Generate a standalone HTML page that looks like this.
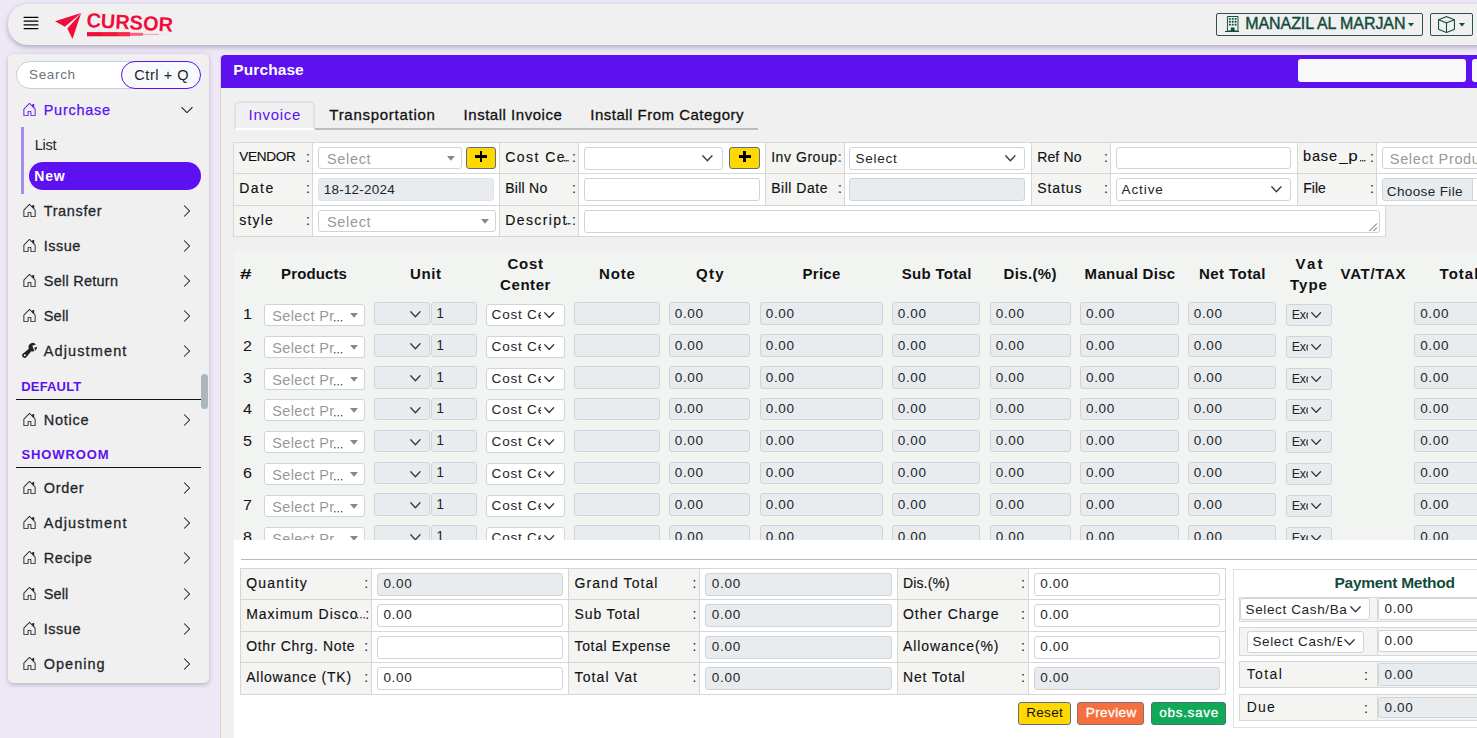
<!DOCTYPE html>
<html><head><meta charset="utf-8"><title>Purchase</title>
<style>
html,body{margin:0;padding:0;}
html{overflow:hidden;width:1477px;height:738px;}
body{width:1477px;height:738px;overflow:hidden;position:relative;background:#ede7f6;font-family:"Liberation Sans", sans-serif;}
div,span{box-sizing:border-box}
#app{position:absolute;left:0;top:0;width:1477px;height:738px;overflow:hidden;}
svg{position:absolute;overflow:visible}
</style></head><body>
<div id="app">
<div style="position:absolute;left:8.00px;top:4.00px;width:1532.00px;height:40.70px;box-sizing:border-box;background:#f0f0f0;border-radius:20px 0 0 20px;box-shadow:0 2px 5px rgba(60,50,80,.35);"></div>
<svg style="left:20.60px;top:13.40px" width="20" height="20" viewBox="0 0 16 16" fill="#000" ><path d="M2 12.5a.5.5 0 0 1 .5-.5h11a.5.5 0 0 1 0 1h-11a.5.5 0 0 1-.5-.5m0-3a.5.5 0 0 1 .5-.5h11a.5.5 0 0 1 0 1h-11a.5.5 0 0 1-.5-.5m0-3a.5.5 0 0 1 .5-.5h11a.5.5 0 0 1 0 1h-11a.5.5 0 0 1-.5-.5m0-3a.5.5 0 0 1 .5-.5h11a.5.5 0 0 1 0 1h-11a.5.5 0 0 1-.5-.5"/></svg>
<svg style="left:0;top:0" width="200" height="48" viewBox="0 0 200 48"><g fill="#f20c3a"><path d="M55.0 21.3L81.0 12.9L80.0 13.9L64.9 26.7Z"/><path d="M81.1 13.3L72.5 38.9L67.3 28.6Z"/></g><path d="M87 32.1H102V36.3H87Z" fill="#f20c3a"/><path d="M102 32.1H117V36.3H102Z" fill="#f3173f"/><path d="M117 32.1H130V36.3H117Z" fill="#f42a4f"/><path d="M130 32.8H143V35.8H130Z" fill="#f5607c"/><path d="M143 33.9H159V35H143Z" fill="#f6a3b2"/><path d="M159 34.2H173V34.8H159Z" fill="#f0dfe2"/><text x="86.2" y="26.9" font-family="Liberation Sans" font-weight="700" font-size="20.3" fill="#f20c3a" textLength="86.5" lengthAdjust="spacingAndGlyphs" transform="rotate(3.2 86 27)">CURSOR</text></svg>
<div style="position:absolute;left:1216.00px;top:13.00px;width:207.00px;height:23.00px;box-sizing:border-box;border:1px solid #2f5447;border-radius:2px;"></div>
<svg style="left:1225.00px;top:16.20px" width="15.4" height="15.4" viewBox="0 0 16 16" fill="#0f4c3a" ><path d="M4 2.5a.5.5 0 0 1 .5-.5h1a.5.5 0 0 1 .5.5v1a.5.5 0 0 1-.5.5h-1a.5.5 0 0 1-.5-.5zm3 0a.5.5 0 0 1 .5-.5h1a.5.5 0 0 1 .5.5v1a.5.5 0 0 1-.5.5h-1a.5.5 0 0 1-.5-.5zm3.5-.5a.5.5 0 0 0-.5.5v1a.5.5 0 0 0 .5.5h1a.5.5 0 0 0 .5-.5v-1a.5.5 0 0 0-.5-.5zM4 5.5a.5.5 0 0 1 .5-.5h1a.5.5 0 0 1 .5.5v1a.5.5 0 0 1-.5.5h-1a.5.5 0 0 1-.5-.5zM7.500 5a.5.5 0 0 0-.5.5v1a.5.5 0 0 0 .5.5h1a.5.5 0 0 0 .5-.5v-1a.5.5 0 0 0-.5-.5zm2.500.5a.5.5 0 0 1 .5-.5h1a.5.5 0 0 1 .5.5v1a.5.5 0 0 1-.5.5h-1a.5.5 0 0 1-.5-.5zM4.500 8a.5.5 0 0 0-.5.5v1a.5.5 0 0 0 .5.5h1a.5.5 0 0 0 .5-.5v-1a.5.5 0 0 0-.5-.5zm2.500.5a.5.5 0 0 1 .5-.5h1a.5.5 0 0 1 .5.5v1a.5.5 0 0 1-.5.5h-1a.5.5 0 0 1-.5-.5zm3.500-.5a.5.5 0 0 0-.5.5v1a.5.5 0 0 0 .5.5h1a.5.5 0 0 0 .5-.5v-1a.5.5 0 0 0-.5-.5z"/><path d="M2 1a1 1 0 0 1 1-1h10a1 1 0 0 1 1 1v14a1 1 0 0 1-1 1H3a1 1 0 0 1-1-1zm11 0H3v14h3v-2.500a.5.5 0 0 1 .5-.5h3a.5.5 0 0 1 .5.5V15h3z"/></svg>
<div style="position:absolute;left:1225.20px;top:30.60px;width:14.00px;height:1.10px;box-sizing:border-box;background:#0f4c3a;"></div>
<span style="position:absolute;left:1245.24px;top:15.66px;font-size:16px;line-height:1;white-space:pre;color:#0f4c3a;letter-spacing:-0.081px;-webkit-text-stroke:0.4px #0f4c3a;">MANAZIL AL MARJAN</span>
<svg style="left:1407.50px;top:23.30px" width="6" height="3.4" viewBox="0 0 6 3.4"><path d="M0 0H6L3.0 3.4Z" fill="#0f4c3a"/></svg>
<div style="position:absolute;left:1430.00px;top:13.00px;width:43.00px;height:23.00px;box-sizing:border-box;border:1px solid #2f5447;border-radius:2px;"></div>
<svg style="left:1437.50px;top:15.50px" width="17" height="17" viewBox="0 0 16 16" fill="#0f4c3a" ><path d="M8.186 1.113a.5.5 0 0 0-.372 0L1.846 3.500 8 5.961 14.154 3.500zM15 4.239l-6.500 2.600v7.922l6.500-2.600V4.240zM7.500 14.762V6.838L1 4.239v7.923zM7.443.184a1.500 1.500 0 0 1 1.114 0l7.129 2.852A.5.5 0 0 1 16 3.500v8.662a1 1 0 0 1-.629.928l-7.185 2.874a.5.5 0 0 1-.372 0L.630 13.090a1 1 0 0 1-.630-.928V3.500a.5.5 0 0 1 .314-.464z"/></svg>
<svg style="left:1458.50px;top:23.30px" width="6" height="3.4" viewBox="0 0 6 3.4"><path d="M0 0H6L3.0 3.4Z" fill="#0f4c3a"/></svg>
<div style="position:absolute;left:8.00px;top:53.60px;width:201.00px;height:629.40px;box-sizing:border-box;background:#f0f0f0;border-radius:5px;box-shadow:0 1.5px 4px rgba(60,50,80,.27);"></div>
<div style="position:absolute;left:16.00px;top:61.00px;width:184.00px;height:28.00px;box-sizing:border-box;background:#fff;border:1px solid #c9ced6;border-radius:14px;"></div>
<span style="position:absolute;left:28.99px;top:68.07px;font-size:13.5px;line-height:1;white-space:pre;color:#6c757d;letter-spacing:0.668px;">Search</span>
<div style="position:absolute;left:121.00px;top:61.00px;width:79.60px;height:28.00px;box-sizing:border-box;background:#f8f9fa;border:1.5px solid #5d10f0;border-radius:14px;"></div>
<span style="position:absolute;left:134.33px;top:67.93px;font-size:14.5px;line-height:1;white-space:pre;color:#212529;letter-spacing:0.554px;">Ctrl + Q</span>
<svg style="left:21.90px;top:102.00px" width="15" height="15" viewBox="0 0 16 16" fill="#5d10f0" ><path d="M8.354 1.146a.5.5 0 0 0-.708 0l-6 6A.5.5 0 0 0 1.5 7.5v7a.5.5 0 0 0 .5.5h4.5a.5.5 0 0 0 .5-.5v-4h2v4a.5.5 0 0 0 .5.5H14a.5.5 0 0 0 .5-.5v-7a.5.5 0 0 0-.146-.354L13 5.793V2.500a.5.5 0 0 0-.5-.5h-1a.5.5 0 0 0-.5.5v1.293zM2.5 14V7.707l5.5-5.500 5.500 5.500V14H10v-4a.5.5 0 0 0-.5-.5h-3a.5.5 0 0 0-.5.5v4z"/></svg>
<span style="position:absolute;left:43.73px;top:102.63px;font-size:14.5px;line-height:1;white-space:pre;color:#5d10f0;letter-spacing:0.725px;-webkit-text-stroke:0.25px #5d10f0;">Purchase</span>
<svg style="left:180.00px;top:102.90px" width="14" height="14" viewBox="0 0 16 16" fill="#0a0a0a" ><path d="M1.646 4.646a.5.5 0 0 1 .708 0L8 10.293l5.646-5.647a.5.5 0 0 1 .708.708l-6 6a.5.5 0 0 1-.708 0l-6-6a.5.5 0 0 1 0-.708"/></svg>
<div style="position:absolute;left:21.00px;top:127.00px;width:3.00px;height:66.60px;box-sizing:border-box;background:#a88af3;"></div>
<span style="position:absolute;left:34.63px;top:137.73px;font-size:14.5px;line-height:1;white-space:pre;color:#212529;letter-spacing:-0.213px;">List</span>
<div style="position:absolute;left:29.00px;top:161.80px;width:172.20px;height:28.00px;box-sizing:border-box;background:#5d10f0;border-radius:14px;"></div>
<span style="position:absolute;left:34.36px;top:169.35px;font-size:14px;line-height:1;white-space:pre;color:#fff;font-weight:700;letter-spacing:0.742px;">New</span>
<svg style="left:21.90px;top:203.00px" width="15" height="15" viewBox="0 0 16 16" fill="#212529" ><path d="M8.354 1.146a.5.5 0 0 0-.708 0l-6 6A.5.5 0 0 0 1.5 7.5v7a.5.5 0 0 0 .5.5h4.5a.5.5 0 0 0 .5-.5v-4h2v4a.5.5 0 0 0 .5.5H14a.5.5 0 0 0 .5-.5v-7a.5.5 0 0 0-.146-.354L13 5.793V2.500a.5.5 0 0 0-.5-.5h-1a.5.5 0 0 0-.5.5v1.293zM2.5 14V7.707l5.5-5.500 5.500 5.500V14H10v-4a.5.5 0 0 0-.5-.5h-3a.5.5 0 0 0-.5.5v4z"/></svg>
<span style="position:absolute;left:43.73px;top:203.63px;font-size:14.5px;line-height:1;white-space:pre;color:#212529;letter-spacing:0.627px;-webkit-text-stroke:0.27px #212529;">Transfer</span>
<svg style="left:180.00px;top:204.00px" width="14" height="14" viewBox="0 0 16 16" fill="#0a0a0a" ><path d="M4.646 1.646a.5.5 0 0 1 .708 0l6 6a.5.5 0 0 1 0 .708l-6 6a.5.5 0 0 1-.708-.708L10.293 8 4.646 2.354a.5.5 0 0 1 0-.708"/></svg>
<svg style="left:21.90px;top:238.00px" width="15" height="15" viewBox="0 0 16 16" fill="#212529" ><path d="M8.354 1.146a.5.5 0 0 0-.708 0l-6 6A.5.5 0 0 0 1.5 7.5v7a.5.5 0 0 0 .5.5h4.5a.5.5 0 0 0 .5-.5v-4h2v4a.5.5 0 0 0 .5.5H14a.5.5 0 0 0 .5-.5v-7a.5.5 0 0 0-.146-.354L13 5.793V2.500a.5.5 0 0 0-.5-.5h-1a.5.5 0 0 0-.5.5v1.293zM2.5 14V7.707l5.5-5.500 5.500 5.500V14H10v-4a.5.5 0 0 0-.5-.5h-3a.5.5 0 0 0-.5.5v4z"/></svg>
<span style="position:absolute;left:43.73px;top:238.63px;font-size:14.5px;line-height:1;white-space:pre;color:#212529;letter-spacing:0.467px;-webkit-text-stroke:0.27px #212529;">Issue</span>
<svg style="left:180.00px;top:239.00px" width="14" height="14" viewBox="0 0 16 16" fill="#0a0a0a" ><path d="M4.646 1.646a.5.5 0 0 1 .708 0l6 6a.5.5 0 0 1 0 .708l-6 6a.5.5 0 0 1-.708-.708L10.293 8 4.646 2.354a.5.5 0 0 1 0-.708"/></svg>
<svg style="left:21.90px;top:273.00px" width="15" height="15" viewBox="0 0 16 16" fill="#212529" ><path d="M8.354 1.146a.5.5 0 0 0-.708 0l-6 6A.5.5 0 0 0 1.5 7.5v7a.5.5 0 0 0 .5.5h4.5a.5.5 0 0 0 .5-.5v-4h2v4a.5.5 0 0 0 .5.5H14a.5.5 0 0 0 .5-.5v-7a.5.5 0 0 0-.146-.354L13 5.793V2.500a.5.5 0 0 0-.5-.5h-1a.5.5 0 0 0-.5.5v1.293zM2.5 14V7.707l5.5-5.500 5.500 5.500V14H10v-4a.5.5 0 0 0-.5-.5h-3a.5.5 0 0 0-.5.5v4z"/></svg>
<span style="position:absolute;left:43.73px;top:273.63px;font-size:14.5px;line-height:1;white-space:pre;color:#212529;letter-spacing:0.251px;-webkit-text-stroke:0.27px #212529;">Sell Return</span>
<svg style="left:180.00px;top:274.00px" width="14" height="14" viewBox="0 0 16 16" fill="#0a0a0a" ><path d="M4.646 1.646a.5.5 0 0 1 .708 0l6 6a.5.5 0 0 1 0 .708l-6 6a.5.5 0 0 1-.708-.708L10.293 8 4.646 2.354a.5.5 0 0 1 0-.708"/></svg>
<svg style="left:21.90px;top:308.00px" width="15" height="15" viewBox="0 0 16 16" fill="#212529" ><path d="M8.354 1.146a.5.5 0 0 0-.708 0l-6 6A.5.5 0 0 0 1.5 7.5v7a.5.5 0 0 0 .5.5h4.5a.5.5 0 0 0 .5-.5v-4h2v4a.5.5 0 0 0 .5.5H14a.5.5 0 0 0 .5-.5v-7a.5.5 0 0 0-.146-.354L13 5.793V2.500a.5.5 0 0 0-.5-.5h-1a.5.5 0 0 0-.5.5v1.293zM2.5 14V7.707l5.5-5.500 5.500 5.500V14H10v-4a.5.5 0 0 0-.5-.5h-3a.5.5 0 0 0-.5.5v4z"/></svg>
<span style="position:absolute;left:43.73px;top:308.63px;font-size:14.5px;line-height:1;white-space:pre;color:#212529;letter-spacing:0.217px;-webkit-text-stroke:0.27px #212529;">Sell</span>
<svg style="left:180.00px;top:309.00px" width="14" height="14" viewBox="0 0 16 16" fill="#0a0a0a" ><path d="M4.646 1.646a.5.5 0 0 1 .708 0l6 6a.5.5 0 0 1 0 .708l-6 6a.5.5 0 0 1-.708-.708L10.293 8 4.646 2.354a.5.5 0 0 1 0-.708"/></svg>
<svg style="left:21.90px;top:343.00px" width="15" height="15" viewBox="0 0 16 16" fill="#212529" ><path d="M16 4.500a4.500 4.500 0 0 1-1.703 3.526L13 5l2.959-1.110q.040.300.041.610"/><path d="M11.500 9c.653 0 1.273-.139 1.833-.390L12 5.500 11 3l3.826-1.530A4.500 4.500 0 0 0 7.290 6.092l-6.116 5.096a2.583 2.583 0 1 0 3.638 3.638L9.908 8.710A4.500 4.500 0 0 0 11.500 9M3 14a1 1 0 1 1 0-2 1 1 0 0 1 0 2"/></svg>
<span style="position:absolute;left:43.73px;top:343.63px;font-size:14.5px;line-height:1;white-space:pre;color:#212529;letter-spacing:1.121px;-webkit-text-stroke:0.27px #212529;">Adjustment</span>
<svg style="left:180.00px;top:344.00px" width="14" height="14" viewBox="0 0 16 16" fill="#0a0a0a" ><path d="M4.646 1.646a.5.5 0 0 1 .708 0l6 6a.5.5 0 0 1 0 .708l-6 6a.5.5 0 0 1-.708-.708L10.293 8 4.646 2.354a.5.5 0 0 1 0-.708"/></svg>
<span style="position:absolute;left:21.22px;top:380.30px;font-size:13px;line-height:1;white-space:pre;color:#5d10f0;font-weight:700;letter-spacing:0.179px;">DEFAULT</span>
<div style="position:absolute;left:16.00px;top:399.20px;width:184.60px;height:1.10px;box-sizing:border-box;background:#111;"></div>
<div style="position:absolute;left:201.00px;top:374.00px;width:7.00px;height:35.00px;box-sizing:border-box;background:#adb5bd;border-radius:3.5px;"></div>
<svg style="left:21.90px;top:412.00px" width="15" height="15" viewBox="0 0 16 16" fill="#212529" ><path d="M8.354 1.146a.5.5 0 0 0-.708 0l-6 6A.5.5 0 0 0 1.5 7.5v7a.5.5 0 0 0 .5.5h4.5a.5.5 0 0 0 .5-.5v-4h2v4a.5.5 0 0 0 .5.5H14a.5.5 0 0 0 .5-.5v-7a.5.5 0 0 0-.146-.354L13 5.793V2.500a.5.5 0 0 0-.5-.5h-1a.5.5 0 0 0-.5.5v1.293zM2.5 14V7.707l5.5-5.500 5.500 5.500V14H10v-4a.5.5 0 0 0-.5-.5h-3a.5.5 0 0 0-.5.5v4z"/></svg>
<span style="position:absolute;left:43.73px;top:412.63px;font-size:14.5px;line-height:1;white-space:pre;color:#212529;letter-spacing:0.766px;-webkit-text-stroke:0.27px #212529;">Notice</span>
<svg style="left:180.00px;top:413.00px" width="14" height="14" viewBox="0 0 16 16" fill="#0a0a0a" ><path d="M4.646 1.646a.5.5 0 0 1 .708 0l6 6a.5.5 0 0 1 0 .708l-6 6a.5.5 0 0 1-.708-.708L10.293 8 4.646 2.354a.5.5 0 0 1 0-.708"/></svg>
<span style="position:absolute;left:21.42px;top:448.40px;font-size:13px;line-height:1;white-space:pre;color:#5d10f0;font-weight:700;letter-spacing:0.896px;">SHOWROOM</span>
<div style="position:absolute;left:16.00px;top:467.00px;width:184.60px;height:1.10px;box-sizing:border-box;background:#111;"></div>
<svg style="left:21.90px;top:480.00px" width="15" height="15" viewBox="0 0 16 16" fill="#212529" ><path d="M8.354 1.146a.5.5 0 0 0-.708 0l-6 6A.5.5 0 0 0 1.5 7.5v7a.5.5 0 0 0 .5.5h4.5a.5.5 0 0 0 .5-.5v-4h2v4a.5.5 0 0 0 .5.5H14a.5.5 0 0 0 .5-.5v-7a.5.5 0 0 0-.146-.354L13 5.793V2.500a.5.5 0 0 0-.5-.5h-1a.5.5 0 0 0-.5.5v1.293zM2.5 14V7.707l5.5-5.500 5.500 5.500V14H10v-4a.5.5 0 0 0-.5-.5h-3a.5.5 0 0 0-.5.5v4z"/></svg>
<span style="position:absolute;left:43.73px;top:480.63px;font-size:14.5px;line-height:1;white-space:pre;color:#212529;letter-spacing:0.715px;-webkit-text-stroke:0.27px #212529;">Order</span>
<svg style="left:180.00px;top:481.00px" width="14" height="14" viewBox="0 0 16 16" fill="#0a0a0a" ><path d="M4.646 1.646a.5.5 0 0 1 .708 0l6 6a.5.5 0 0 1 0 .708l-6 6a.5.5 0 0 1-.708-.708L10.293 8 4.646 2.354a.5.5 0 0 1 0-.708"/></svg>
<svg style="left:21.90px;top:515.00px" width="15" height="15" viewBox="0 0 16 16" fill="#212529" ><path d="M8.354 1.146a.5.5 0 0 0-.708 0l-6 6A.5.5 0 0 0 1.5 7.5v7a.5.5 0 0 0 .5.5h4.5a.5.5 0 0 0 .5-.5v-4h2v4a.5.5 0 0 0 .5.5H14a.5.5 0 0 0 .5-.5v-7a.5.5 0 0 0-.146-.354L13 5.793V2.500a.5.5 0 0 0-.5-.5h-1a.5.5 0 0 0-.5.5v1.293zM2.5 14V7.707l5.5-5.500 5.500 5.500V14H10v-4a.5.5 0 0 0-.5-.5h-3a.5.5 0 0 0-.5.5v4z"/></svg>
<span style="position:absolute;left:43.73px;top:515.63px;font-size:14.5px;line-height:1;white-space:pre;color:#212529;letter-spacing:1.133px;-webkit-text-stroke:0.27px #212529;">Adjustment</span>
<svg style="left:180.00px;top:516.00px" width="14" height="14" viewBox="0 0 16 16" fill="#0a0a0a" ><path d="M4.646 1.646a.5.5 0 0 1 .708 0l6 6a.5.5 0 0 1 0 .708l-6 6a.5.5 0 0 1-.708-.708L10.293 8 4.646 2.354a.5.5 0 0 1 0-.708"/></svg>
<svg style="left:21.90px;top:550.00px" width="15" height="15" viewBox="0 0 16 16" fill="#212529" ><path d="M8.354 1.146a.5.5 0 0 0-.708 0l-6 6A.5.5 0 0 0 1.5 7.5v7a.5.5 0 0 0 .5.5h4.5a.5.5 0 0 0 .5-.5v-4h2v4a.5.5 0 0 0 .5.5H14a.5.5 0 0 0 .5-.5v-7a.5.5 0 0 0-.146-.354L13 5.793V2.500a.5.5 0 0 0-.5-.5h-1a.5.5 0 0 0-.5.5v1.293zM2.5 14V7.707l5.5-5.500 5.500 5.500V14H10v-4a.5.5 0 0 0-.5-.5h-3a.5.5 0 0 0-.5.5v4z"/></svg>
<span style="position:absolute;left:43.73px;top:550.63px;font-size:14.5px;line-height:1;white-space:pre;color:#212529;letter-spacing:0.580px;-webkit-text-stroke:0.27px #212529;">Recipe</span>
<svg style="left:180.00px;top:551.00px" width="14" height="14" viewBox="0 0 16 16" fill="#0a0a0a" ><path d="M4.646 1.646a.5.5 0 0 1 .708 0l6 6a.5.5 0 0 1 0 .708l-6 6a.5.5 0 0 1-.708-.708L10.293 8 4.646 2.354a.5.5 0 0 1 0-.708"/></svg>
<svg style="left:21.90px;top:586.00px" width="15" height="15" viewBox="0 0 16 16" fill="#212529" ><path d="M8.354 1.146a.5.5 0 0 0-.708 0l-6 6A.5.5 0 0 0 1.5 7.5v7a.5.5 0 0 0 .5.5h4.5a.5.5 0 0 0 .5-.5v-4h2v4a.5.5 0 0 0 .5.5H14a.5.5 0 0 0 .5-.5v-7a.5.5 0 0 0-.146-.354L13 5.793V2.500a.5.5 0 0 0-.5-.5h-1a.5.5 0 0 0-.5.5v1.293zM2.5 14V7.707l5.5-5.500 5.500 5.500V14H10v-4a.5.5 0 0 0-.5-.5h-3a.5.5 0 0 0-.5.5v4z"/></svg>
<span style="position:absolute;left:43.73px;top:586.63px;font-size:14.5px;line-height:1;white-space:pre;color:#212529;letter-spacing:0.118px;-webkit-text-stroke:0.27px #212529;">Sell</span>
<svg style="left:180.00px;top:587.00px" width="14" height="14" viewBox="0 0 16 16" fill="#0a0a0a" ><path d="M4.646 1.646a.5.5 0 0 1 .708 0l6 6a.5.5 0 0 1 0 .708l-6 6a.5.5 0 0 1-.708-.708L10.293 8 4.646 2.354a.5.5 0 0 1 0-.708"/></svg>
<svg style="left:21.90px;top:621.00px" width="15" height="15" viewBox="0 0 16 16" fill="#212529" ><path d="M8.354 1.146a.5.5 0 0 0-.708 0l-6 6A.5.5 0 0 0 1.5 7.5v7a.5.5 0 0 0 .5.5h4.5a.5.5 0 0 0 .5-.5v-4h2v4a.5.5 0 0 0 .5.5H14a.5.5 0 0 0 .5-.5v-7a.5.5 0 0 0-.146-.354L13 5.793V2.500a.5.5 0 0 0-.5-.5h-1a.5.5 0 0 0-.5.5v1.293zM2.5 14V7.707l5.5-5.500 5.500 5.500V14H10v-4a.5.5 0 0 0-.5-.5h-3a.5.5 0 0 0-.5.5v4z"/></svg>
<span style="position:absolute;left:43.73px;top:621.63px;font-size:14.5px;line-height:1;white-space:pre;color:#212529;letter-spacing:0.517px;-webkit-text-stroke:0.27px #212529;">Issue</span>
<svg style="left:180.00px;top:622.00px" width="14" height="14" viewBox="0 0 16 16" fill="#0a0a0a" ><path d="M4.646 1.646a.5.5 0 0 1 .708 0l6 6a.5.5 0 0 1 0 .708l-6 6a.5.5 0 0 1-.708-.708L10.293 8 4.646 2.354a.5.5 0 0 1 0-.708"/></svg>
<svg style="left:21.90px;top:656.00px" width="15" height="15" viewBox="0 0 16 16" fill="#212529" ><path d="M8.354 1.146a.5.5 0 0 0-.708 0l-6 6A.5.5 0 0 0 1.5 7.5v7a.5.5 0 0 0 .5.5h4.5a.5.5 0 0 0 .5-.5v-4h2v4a.5.5 0 0 0 .5.5H14a.5.5 0 0 0 .5-.5v-7a.5.5 0 0 0-.146-.354L13 5.793V2.500a.5.5 0 0 0-.5-.5h-1a.5.5 0 0 0-.5.5v1.293zM2.5 14V7.707l5.5-5.500 5.500 5.500V14H10v-4a.5.5 0 0 0-.5-.5h-3a.5.5 0 0 0-.5.5v4z"/></svg>
<span style="position:absolute;left:43.73px;top:656.63px;font-size:14.5px;line-height:1;white-space:pre;color:#212529;letter-spacing:1.019px;-webkit-text-stroke:0.27px #212529;">Opening</span>
<svg style="left:180.00px;top:657.00px" width="14" height="14" viewBox="0 0 16 16" fill="#0a0a0a" ><path d="M4.646 1.646a.5.5 0 0 1 .708 0l6 6a.5.5 0 0 1 0 .708l-6 6a.5.5 0 0 1-.708-.708L10.293 8 4.646 2.354a.5.5 0 0 1 0-.708"/></svg>
<div style="position:absolute;left:220.00px;top:56.00px;width:1320.00px;height:744.00px;box-sizing:border-box;background:#f0f0f0;border-left:1px solid #d2d2d2;"></div>
<div style="position:absolute;left:221.00px;top:54.80px;width:1319.00px;height:32.80px;box-sizing:border-box;background:#5d10f0;border-radius:4px 0 0 0;"></div>
<span style="position:absolute;left:233.37px;top:62.28px;font-size:15.5px;line-height:1;white-space:pre;color:#fff;font-weight:700;letter-spacing:0.080px;">Purchase</span>
<div style="position:absolute;left:1298.00px;top:59.20px;width:167.60px;height:22.90px;box-sizing:border-box;background:#f8f8f8;border-radius:3px;"></div>
<div style="position:absolute;left:1472.00px;top:59.20px;width:68.00px;height:22.90px;box-sizing:border-box;background:#f8f8f8;border-radius:3px;"></div>
<div style="position:absolute;left:315.00px;top:128.00px;width:443.00px;height:2.00px;box-sizing:border-box;background:#bcbcbc;"></div>
<div style="position:absolute;left:234.00px;top:101.00px;width:81.00px;height:29.00px;box-sizing:border-box;background:#f0f0f0;border:2px solid #dde1e7;border-bottom:2px solid #fff;border-radius:6px 6px 0 0;"></div>
<span style="position:absolute;left:248.60px;top:106.80px;font-size:15px;line-height:1;white-space:pre;color:#5d10f0;letter-spacing:0.711px;">Invoice</span>
<span style="position:absolute;left:329.30px;top:106.80px;font-size:15px;line-height:1;white-space:pre;color:#111;letter-spacing:0.725px;-webkit-text-stroke:0.3px #111;">Transportation</span>
<span style="position:absolute;left:463.60px;top:106.80px;font-size:15px;line-height:1;white-space:pre;color:#111;letter-spacing:0.522px;-webkit-text-stroke:0.3px #111;">Install Invoice</span>
<span style="position:absolute;left:590.30px;top:106.80px;font-size:15px;line-height:1;white-space:pre;color:#111;letter-spacing:0.490px;-webkit-text-stroke:0.3px #111;">Install From Category</span>
<div style="position:absolute;left:233.00px;top:142.00px;width:80.00px;height:32.00px;box-sizing:border-box;background:#f4f5f3;border:1px solid #d9d6d6;"></div>
<span style="position:absolute;left:239.18px;top:150.09px;font-size:13.6px;line-height:1;white-space:pre;color:#111;letter-spacing:-0.308px;-webkit-text-stroke:0.15px #111;">VENDOR</span>
<span style="position:absolute;left:306.06px;top:149.75px;font-size:14px;line-height:1;white-space:pre;color:#111;">:</span>
<div style="position:absolute;left:312.00px;top:142.00px;width:188.00px;height:32.00px;box-sizing:border-box;background:#fff;border:1px solid #d9d6d6;"></div>
<div style="position:absolute;left:318.00px;top:147.00px;width:144.00px;height:22.00px;box-sizing:border-box;background:#fff;border:1px solid #ced4da;border-radius:3px;"></div>
<span style="position:absolute;left:326.93px;top:151.63px;font-size:14.5px;line-height:1;white-space:pre;color:#999;letter-spacing:0.686px;">Select</span>
<svg style="left:447.10px;top:156.05px" width="7.8" height="4.7" viewBox="0 0 7.8 4.7"><path d="M0 0H7.8L3.9 4.7Z" fill="#888"/></svg>
<div style="position:absolute;left:466.00px;top:147.00px;width:30.00px;height:22.00px;box-sizing:border-box;background:#ffd800;border:1px solid #5f6d8c;border-radius:3px;"></div>
<div style="position:absolute;left:475.00px;top:155.20px;width:12.00px;height:2.60px;box-sizing:border-box;background:#000;"></div>
<div style="position:absolute;left:479.70px;top:150.90px;width:2.60px;height:11.00px;box-sizing:border-box;background:#000;"></div>
<div style="position:absolute;left:499.00px;top:142.00px;width:80.00px;height:32.00px;box-sizing:border-box;background:#f4f5f3;border:1px solid #d9d6d6;"></div>
<span style="position:absolute;left:505.16px;top:149.75px;font-size:14px;line-height:1;white-space:pre;color:#111;letter-spacing:1.467px;-webkit-text-stroke:0.15px #111;">Cost Ce</span>
<svg style="left:564.20px;top:160.14px" width="4.80" height="1.46" fill="#111"><circle cx="0.73" cy="0.73" r="0.73"/><circle cx="2.40" cy="0.73" r="0.73"/><circle cx="4.07" cy="0.73" r="0.73"/></svg>
<span style="position:absolute;left:572.06px;top:149.75px;font-size:14px;line-height:1;white-space:pre;color:#111;">:</span>
<div style="position:absolute;left:578.00px;top:142.00px;width:188.00px;height:32.00px;box-sizing:border-box;background:#fff;border:1px solid #d9d6d6;"></div>
<div style="position:absolute;left:584.00px;top:147.00px;width:139.00px;height:23.00px;box-sizing:border-box;background:#fff;border:1px solid #ced4da;border-radius:3px;"></div>
<svg style="left:701.60px;top:155.36px" width="10.8" height="6.48" viewBox="0 0 10.8 6.48"><path d="M0.775 0.775L5.4 5.71L10.025 0.775" fill="none" stroke="#343a40" stroke-width="1.35" stroke-linecap="round" stroke-linejoin="round"/></svg>
<div style="position:absolute;left:729.00px;top:147.00px;width:31.00px;height:22.00px;box-sizing:border-box;background:#ffd800;border:1px solid #5f6d8c;border-radius:3px;"></div>
<div style="position:absolute;left:738.50px;top:155.20px;width:12.00px;height:2.60px;box-sizing:border-box;background:#000;"></div>
<div style="position:absolute;left:743.20px;top:150.90px;width:2.60px;height:11.00px;box-sizing:border-box;background:#000;"></div>
<div style="position:absolute;left:765.00px;top:142.00px;width:80.00px;height:32.00px;box-sizing:border-box;background:#f4f5f3;border:1px solid #d9d6d6;"></div>
<span style="position:absolute;left:771.16px;top:149.75px;font-size:14px;line-height:1;white-space:pre;color:#111;letter-spacing:0.556px;-webkit-text-stroke:0.15px #111;">Inv Group:</span>
<div style="position:absolute;left:844.00px;top:142.00px;width:188.00px;height:32.00px;box-sizing:border-box;background:#fff;border:1px solid #d9d6d6;"></div>
<span style="position:absolute;left:837.16px;top:149.75px;font-size:14px;line-height:1;white-space:pre;color:#3fa0e0;">:</span>
<div style="position:absolute;left:849.00px;top:147.00px;width:176.00px;height:23.00px;box-sizing:border-box;background:#fff;border:1px solid #ced4da;border-radius:3px;"></div>
<span style="position:absolute;left:855.59px;top:151.57px;font-size:13.5px;line-height:1;white-space:pre;color:#212529;letter-spacing:0.738px;">Select</span>
<svg style="left:1005.10px;top:155.36px" width="10.8" height="6.48" viewBox="0 0 10.8 6.48"><path d="M0.775 0.775L5.4 5.71L10.025 0.775" fill="none" stroke="#343a40" stroke-width="1.35" stroke-linecap="round" stroke-linejoin="round"/></svg>
<div style="position:absolute;left:1031.00px;top:142.00px;width:80.00px;height:32.00px;box-sizing:border-box;background:#f4f5f3;border:1px solid #d9d6d6;"></div>
<span style="position:absolute;left:1037.16px;top:149.75px;font-size:14px;line-height:1;white-space:pre;color:#111;letter-spacing:0.140px;-webkit-text-stroke:0.15px #111;">Ref No</span>
<span style="position:absolute;left:1104.06px;top:149.75px;font-size:14px;line-height:1;white-space:pre;color:#111;">:</span>
<div style="position:absolute;left:1110.00px;top:142.00px;width:188.00px;height:32.00px;box-sizing:border-box;background:#fff;border:1px solid #d9d6d6;"></div>
<div style="position:absolute;left:1116.00px;top:147.00px;width:175.00px;height:22.00px;box-sizing:border-box;background:#fff;border:1px solid #ced4da;border-radius:3px;"></div>
<div style="position:absolute;left:1297.00px;top:142.00px;width:80.00px;height:32.00px;box-sizing:border-box;background:#f4f5f3;border:1px solid #d9d6d6;"></div>
<span style="position:absolute;left:1303.12px;top:149.24px;font-size:14.6px;line-height:1;white-space:pre;color:#111;letter-spacing:0.765px;-webkit-text-stroke:0.15px #111;">base</span>
<span style="position:absolute;left:1370.06px;top:149.75px;font-size:14px;line-height:1;white-space:pre;color:#111;">:</span>
<div style="position:absolute;left:1376.00px;top:142.00px;width:188.00px;height:32.00px;box-sizing:border-box;background:#fff;border:1px solid #d9d6d6;"></div>
<div style="position:absolute;left:1339.00px;top:163.20px;width:8.80px;height:1.20px;box-sizing:border-box;background:#111;"></div>
<span style="position:absolute;left:1348.28px;top:147.21px;font-size:17px;line-height:1;white-space:pre;color:#111;-webkit-text-stroke:0.1px #111;display:inline-block;transform:scaleY(0.86);transform-origin:0 84.65%;">p</span>
<span style="position:absolute;left:1358.46px;top:149.75px;font-size:14px;line-height:1;white-space:pre;color:#111;"></span>
<svg style="left:1359.80px;top:160.14px" width="5.50" height="1.46" fill="#111"><circle cx="0.73" cy="0.73" r="0.73"/><circle cx="2.75" cy="0.73" r="0.73"/><circle cx="4.77" cy="0.73" r="0.73"/></svg>
<div style="position:absolute;left:1382.00px;top:147.00px;width:178.00px;height:22.00px;box-sizing:border-box;background:#fff;border:1px solid #ced4da;border-radius:3px;"></div>
<span style="position:absolute;left:1389.83px;top:151.63px;font-size:14.5px;line-height:1;white-space:pre;color:#999;letter-spacing:0.637px;">Select Produ</span>
<div style="position:absolute;left:233.00px;top:173.00px;width:80.00px;height:33.00px;box-sizing:border-box;background:#f4f5f3;border:1px solid #d9d6d6;"></div>
<span style="position:absolute;left:239.16px;top:180.75px;font-size:14px;line-height:1;white-space:pre;color:#111;letter-spacing:1.534px;-webkit-text-stroke:0.15px #111;">Date</span>
<span style="position:absolute;left:306.06px;top:180.75px;font-size:14px;line-height:1;white-space:pre;color:#111;">:</span>
<div style="position:absolute;left:312.00px;top:173.00px;width:188.00px;height:33.00px;box-sizing:border-box;background:#fff;border:1px solid #d9d6d6;"></div>
<div style="position:absolute;left:318.00px;top:178.00px;width:176.00px;height:23.00px;box-sizing:border-box;background:#e9ecef;border:1px solid #dfe3e7;border-radius:3px;"></div>
<span style="position:absolute;left:323.69px;top:182.57px;font-size:13.5px;line-height:1;white-space:pre;color:#212529;letter-spacing:0.229px;">18-12-2024</span>
<div style="position:absolute;left:499.00px;top:173.00px;width:80.00px;height:33.00px;box-sizing:border-box;background:#f4f5f3;border:1px solid #d9d6d6;"></div>
<span style="position:absolute;left:505.16px;top:180.75px;font-size:14px;line-height:1;white-space:pre;color:#111;letter-spacing:0.269px;-webkit-text-stroke:0.15px #111;">Bill No</span>
<span style="position:absolute;left:572.06px;top:180.75px;font-size:14px;line-height:1;white-space:pre;color:#111;">:</span>
<div style="position:absolute;left:578.00px;top:173.00px;width:188.00px;height:33.00px;box-sizing:border-box;background:#fff;border:1px solid #d9d6d6;"></div>
<div style="position:absolute;left:584.00px;top:178.00px;width:176.00px;height:23.00px;box-sizing:border-box;background:#fff;border:1px solid #ced4da;border-radius:3px;"></div>
<div style="position:absolute;left:765.00px;top:173.00px;width:80.00px;height:33.00px;box-sizing:border-box;background:#f4f5f3;border:1px solid #d9d6d6;"></div>
<span style="position:absolute;left:771.16px;top:180.75px;font-size:14px;line-height:1;white-space:pre;color:#111;letter-spacing:0.530px;-webkit-text-stroke:0.15px #111;">Bill Date</span>
<span style="position:absolute;left:838.06px;top:180.75px;font-size:14px;line-height:1;white-space:pre;color:#111;">:</span>
<div style="position:absolute;left:844.00px;top:173.00px;width:188.00px;height:33.00px;box-sizing:border-box;background:#fff;border:1px solid #d9d6d6;"></div>
<span style="position:absolute;left:837.16px;top:180.75px;font-size:14px;line-height:1;white-space:pre;color:#3fa0e0;">:</span>
<div style="position:absolute;left:849.00px;top:178.00px;width:176.00px;height:23.00px;box-sizing:border-box;background:#e9ecef;border:1px solid #ced4da;border-radius:3px;"></div>
<div style="position:absolute;left:1031.00px;top:173.00px;width:80.00px;height:33.00px;box-sizing:border-box;background:#f4f5f3;border:1px solid #d9d6d6;"></div>
<span style="position:absolute;left:1037.16px;top:180.75px;font-size:14px;line-height:1;white-space:pre;color:#111;letter-spacing:0.915px;-webkit-text-stroke:0.15px #111;">Status</span>
<span style="position:absolute;left:1104.06px;top:180.75px;font-size:14px;line-height:1;white-space:pre;color:#111;">:</span>
<div style="position:absolute;left:1110.00px;top:173.00px;width:188.00px;height:33.00px;box-sizing:border-box;background:#fff;border:1px solid #d9d6d6;"></div>
<div style="position:absolute;left:1116.00px;top:178.00px;width:175.00px;height:23.00px;box-sizing:border-box;background:#fff;border:1px solid #ced4da;border-radius:3px;"></div>
<span style="position:absolute;left:1121.59px;top:182.57px;font-size:13.5px;line-height:1;white-space:pre;color:#212529;letter-spacing:0.891px;">Active</span>
<svg style="left:1271.10px;top:186.36px" width="10.8" height="6.48" viewBox="0 0 10.8 6.48"><path d="M0.775 0.775L5.4 5.71L10.025 0.775" fill="none" stroke="#343a40" stroke-width="1.35" stroke-linecap="round" stroke-linejoin="round"/></svg>
<div style="position:absolute;left:1297.00px;top:173.00px;width:80.00px;height:33.00px;box-sizing:border-box;background:#f4f5f3;border:1px solid #d9d6d6;"></div>
<span style="position:absolute;left:1303.16px;top:180.75px;font-size:14px;line-height:1;white-space:pre;color:#111;letter-spacing:0.039px;-webkit-text-stroke:0.15px #111;">File</span>
<span style="position:absolute;left:1370.06px;top:180.75px;font-size:14px;line-height:1;white-space:pre;color:#111;">:</span>
<div style="position:absolute;left:1376.00px;top:173.00px;width:188.00px;height:33.00px;box-sizing:border-box;background:#fff;border:1px solid #d9d6d6;"></div>
<div style="position:absolute;left:1382.00px;top:178.00px;width:178.00px;height:23.00px;box-sizing:border-box;background:#fff;border:1px solid #ced4da;border-radius:3px;"></div>
<div style="position:absolute;left:1383.00px;top:179.00px;width:90.00px;height:21.00px;box-sizing:border-box;background:#e9ecef;border-right:1px solid #ced4da;border-radius:2px 0 0 2px;"></div>
<span style="position:absolute;left:1386.79px;top:184.97px;font-size:13.5px;line-height:1;white-space:pre;color:#212529;letter-spacing:0.377px;">Choose File</span>
<div style="position:absolute;left:233.00px;top:205.00px;width:80.00px;height:32.00px;box-sizing:border-box;background:#f4f5f3;border:1px solid #d9d6d6;"></div>
<span style="position:absolute;left:239.16px;top:212.75px;font-size:14px;line-height:1;white-space:pre;color:#111;letter-spacing:1.221px;-webkit-text-stroke:0.15px #111;">style</span>
<span style="position:absolute;left:306.06px;top:212.75px;font-size:14px;line-height:1;white-space:pre;color:#111;">:</span>
<div style="position:absolute;left:312.00px;top:205.00px;width:188.00px;height:32.00px;box-sizing:border-box;background:#fff;border:1px solid #d9d6d6;"></div>
<div style="position:absolute;left:318.00px;top:210.00px;width:178.00px;height:22.00px;box-sizing:border-box;background:#fff;border:1px solid #ced4da;border-radius:3px;"></div>
<span style="position:absolute;left:326.93px;top:214.93px;font-size:14.5px;line-height:1;white-space:pre;color:#999;letter-spacing:0.686px;">Select</span>
<svg style="left:481.20px;top:219.05px" width="8" height="4.7" viewBox="0 0 8 4.7"><path d="M0 0H8L4.0 4.7Z" fill="#888"/></svg>
<div style="position:absolute;left:499.00px;top:205.00px;width:80.00px;height:32.00px;box-sizing:border-box;background:#f4f5f3;border:1px solid #d9d6d6;"></div>
<span style="position:absolute;left:505.16px;top:212.75px;font-size:14px;line-height:1;white-space:pre;color:#111;letter-spacing:1.417px;-webkit-text-stroke:0.15px #111;">Descript</span>
<svg style="left:566.10px;top:223.14px" width="4.70" height="1.46" fill="#111"><circle cx="0.73" cy="0.73" r="0.73"/><circle cx="2.35" cy="0.73" r="0.73"/><circle cx="3.97" cy="0.73" r="0.73"/></svg>
<span style="position:absolute;left:572.06px;top:212.75px;font-size:14px;line-height:1;white-space:pre;color:#111;">:</span>
<div style="position:absolute;left:578.00px;top:205.00px;width:808.00px;height:32.00px;box-sizing:border-box;background:#fff;border:1px solid #d9d6d6;"></div>
<div style="position:absolute;left:584.00px;top:210.00px;width:796.00px;height:23.00px;box-sizing:border-box;background:#fff;border:1px solid #ced4da;border-radius:3px;"></div>
<svg style="left:1368px;top:221.6px" width="10" height="10" viewBox="0 0 10 10"><path d="M1.5 9L9 1.5M5.5 9L9 5.5" stroke="#555" stroke-width="1" fill="none"/></svg>
<div style="position:absolute;left:234.00px;top:251.00px;width:1306.00px;height:289.00px;box-sizing:border-box;background:#f2f4f2;border-radius:4px 0 0 0;"></div>
<span style="position:absolute;left:240.10px;top:265.70px;font-size:15px;line-height:1;white-space:pre;color:#111;font-weight:700;display:inline-block;transform:scaleX(1.38);transform-origin:0 0;">#</span>
<span style="position:absolute;left:281.10px;top:265.70px;font-size:15px;line-height:1;white-space:pre;color:#111;font-weight:700;letter-spacing:0.112px;">Products</span>
<span style="position:absolute;left:409.90px;top:265.70px;font-size:15px;line-height:1;white-space:pre;color:#111;font-weight:700;letter-spacing:0.676px;">Unit</span>
<span style="position:absolute;left:507.60px;top:256.30px;font-size:15px;line-height:1;white-space:pre;color:#111;font-weight:700;letter-spacing:0.652px;">Cost</span>
<span style="position:absolute;left:500.10px;top:276.90px;font-size:15px;line-height:1;white-space:pre;color:#111;font-weight:700;letter-spacing:0.557px;">Center</span>
<span style="position:absolute;left:599.10px;top:265.70px;font-size:15px;line-height:1;white-space:pre;color:#111;font-weight:700;letter-spacing:0.819px;">Note</span>
<span style="position:absolute;left:696.10px;top:265.70px;font-size:15px;line-height:1;white-space:pre;color:#111;font-weight:700;letter-spacing:1.192px;">Qty</span>
<span style="position:absolute;left:802.60px;top:265.70px;font-size:15px;line-height:1;white-space:pre;color:#111;font-weight:700;letter-spacing:0.249px;">Price</span>
<span style="position:absolute;left:901.70px;top:265.70px;font-size:15px;line-height:1;white-space:pre;color:#111;font-weight:700;letter-spacing:0.310px;">Sub Total</span>
<span style="position:absolute;left:1003.60px;top:265.70px;font-size:15px;line-height:1;white-space:pre;color:#111;font-weight:700;letter-spacing:0.326px;">Dis.(%)</span>
<span style="position:absolute;left:1084.60px;top:265.70px;font-size:15px;line-height:1;white-space:pre;color:#111;font-weight:700;letter-spacing:0.307px;">Manual Disc</span>
<span style="position:absolute;left:1199.10px;top:265.70px;font-size:15px;line-height:1;white-space:pre;color:#111;font-weight:700;letter-spacing:0.417px;">Net Total</span>
<span style="position:absolute;left:1295.50px;top:256.30px;font-size:15px;line-height:1;white-space:pre;color:#111;font-weight:700;letter-spacing:2.242px;">Vat</span>
<span style="position:absolute;left:1290.10px;top:276.90px;font-size:15px;line-height:1;white-space:pre;color:#111;font-weight:700;letter-spacing:0.965px;">Type</span>
<span style="position:absolute;left:1340.60px;top:265.70px;font-size:15px;line-height:1;white-space:pre;color:#111;font-weight:700;letter-spacing:0.695px;">VAT/TAX</span>
<span style="position:absolute;left:1439.60px;top:265.70px;font-size:15px;line-height:1;white-space:pre;color:#111;font-weight:700;letter-spacing:1.020px;">Total</span>
<div style="position:absolute;left:234px;top:296px;width:1300px;height:244px;overflow:hidden">
<span style="position:absolute;left:8.56px;top:11.15px;font-size:14px;line-height:1;white-space:pre;color:#111;display:inline-block;transform:scaleX(1.15);transform-origin:0 0;">1</span>
<div style="position:absolute;left:30.00px;top:8.00px;width:101.00px;height:22.00px;box-sizing:border-box;background:#fff;border:1px solid #ced4da;border-radius:3px;"></div>
<span style="position:absolute;left:38.13px;top:12.93px;font-size:14.5px;line-height:1;white-space:pre;color:#999;letter-spacing:0.400px;">Select Pr</span>
<svg style="left:99.80px;top:23.69px" width="8.30" height="1.51" fill="#333"><circle cx="0.75" cy="0.75" r="0.75"/><circle cx="4.15" cy="0.75" r="0.75"/><circle cx="7.55" cy="0.75" r="0.75"/></svg>
<svg style="left:115.90px;top:17.30px" width="8" height="4.8" viewBox="0 0 8 4.8"><path d="M0 0H8L4.0 4.8Z" fill="#888"/></svg>
<div style="position:absolute;left:140.00px;top:6.00px;width:56.00px;height:23.00px;box-sizing:border-box;background:#e9ecef;border:1px solid #ced4da;border-radius:3px;"></div>
<svg style="left:175.70px;top:14.96px" width="10.8" height="6.48" viewBox="0 0 10.8 6.48"><path d="M0.775 0.775L5.4 5.71L10.025 0.775" fill="none" stroke="#343a40" stroke-width="1.35" stroke-linecap="round" stroke-linejoin="round"/></svg>
<div style="position:absolute;left:197.00px;top:6.00px;width:46.00px;height:23.00px;box-sizing:border-box;background:#e9ecef;border:1px solid #ced4da;border-radius:3px;"></div>
<span style="position:absolute;left:202.16px;top:10.25px;font-size:14px;line-height:1;white-space:pre;color:#212529;">1</span>
<div style="position:absolute;left:252.00px;top:8.00px;width:79.00px;height:22.00px;box-sizing:border-box;background:#fff;border:1px solid #ced4da;border-radius:3px;"></div>
<div style="position:absolute;left:256px;top:10px;width:50.7px;height:18px;overflow:hidden">
<span style="position:absolute;left:1.59px;top:1.77px;font-size:13.5px;line-height:1;white-space:pre;color:#212529;letter-spacing:0.8px;">Cost Center</span>
</div>
<svg style="left:309.90px;top:16.28px" width="10.4" height="6.24" viewBox="0 0 10.4 6.24"><path d="M0.775 0.775L5.2 5.46L9.625 0.775" fill="none" stroke="#343a40" stroke-width="1.35" stroke-linecap="round" stroke-linejoin="round"/></svg>
<div style="position:absolute;left:340.00px;top:6.00px;width:86.00px;height:23.00px;box-sizing:border-box;background:#e9ecef;border:1px solid #ced4da;border-radius:3px;"></div>
<div style="position:absolute;left:435.00px;top:6.00px;width:81.00px;height:23.00px;box-sizing:border-box;background:#e9ecef;border:1px solid #ced4da;border-radius:3px;"></div>
<span style="position:absolute;left:440.79px;top:10.77px;font-size:13.5px;line-height:1;white-space:pre;color:#212529;letter-spacing:0.646px;">0.00</span>
<div style="position:absolute;left:526.00px;top:6.00px;width:123.00px;height:23.00px;box-sizing:border-box;background:#e9ecef;border:1px solid #ced4da;border-radius:3px;"></div>
<span style="position:absolute;left:531.79px;top:10.77px;font-size:13.5px;line-height:1;white-space:pre;color:#212529;letter-spacing:0.646px;">0.00</span>
<div style="position:absolute;left:658.00px;top:6.00px;width:88.00px;height:23.00px;box-sizing:border-box;background:#e9ecef;border:1px solid #ced4da;border-radius:3px;"></div>
<span style="position:absolute;left:663.79px;top:10.77px;font-size:13.5px;line-height:1;white-space:pre;color:#212529;letter-spacing:0.646px;">0.00</span>
<div style="position:absolute;left:756.00px;top:6.00px;width:81.00px;height:23.00px;box-sizing:border-box;background:#e9ecef;border:1px solid #ced4da;border-radius:3px;"></div>
<span style="position:absolute;left:761.79px;top:10.77px;font-size:13.5px;line-height:1;white-space:pre;color:#212529;letter-spacing:0.646px;">0.00</span>
<div style="position:absolute;left:846.00px;top:6.00px;width:99.00px;height:23.00px;box-sizing:border-box;background:#e9ecef;border:1px solid #ced4da;border-radius:3px;"></div>
<span style="position:absolute;left:851.99px;top:10.77px;font-size:13.5px;line-height:1;white-space:pre;color:#212529;letter-spacing:0.646px;">0.00</span>
<div style="position:absolute;left:954.00px;top:6.00px;width:88.00px;height:23.00px;box-sizing:border-box;background:#e9ecef;border:1px solid #ced4da;border-radius:3px;"></div>
<span style="position:absolute;left:959.79px;top:10.77px;font-size:13.5px;line-height:1;white-space:pre;color:#212529;letter-spacing:0.646px;">0.00</span>
<div style="position:absolute;left:1180.00px;top:6.00px;width:116.00px;height:23.00px;box-sizing:border-box;background:#e9ecef;border:1px solid #ced4da;border-radius:3px;"></div>
<span style="position:absolute;left:1186.19px;top:10.77px;font-size:13.5px;line-height:1;white-space:pre;color:#212529;letter-spacing:0.646px;">0.00</span>
<div style="position:absolute;left:1052.00px;top:8.00px;width:46.00px;height:22.00px;box-sizing:border-box;background:#e9ecef;border:1px solid #ced4da;border-radius:3px;"></div>
<div style="position:absolute;left:1056px;top:10px;width:17.8px;height:18px;overflow:hidden">
<span style="position:absolute;left:1.75px;top:2.62px;font-size:12.5px;line-height:1;white-space:pre;color:#212529;letter-spacing:-0.35px;">Exclusive</span>
</div>
<svg style="left:1077.05px;top:16.41px" width="10.3" height="6.18" viewBox="0 0 10.3 6.18"><path d="M0.775 0.775L5.15 5.41L9.525 0.775" fill="none" stroke="#343a40" stroke-width="1.35" stroke-linecap="round" stroke-linejoin="round"/></svg>
<span style="position:absolute;left:8.56px;top:43.15px;font-size:14px;line-height:1;white-space:pre;color:#111;display:inline-block;transform:scaleX(1.15);transform-origin:0 0;">2</span>
<div style="position:absolute;left:30.00px;top:40.00px;width:101.00px;height:22.00px;box-sizing:border-box;background:#fff;border:1px solid #ced4da;border-radius:3px;"></div>
<span style="position:absolute;left:38.13px;top:44.93px;font-size:14.5px;line-height:1;white-space:pre;color:#999;letter-spacing:0.400px;">Select Pr</span>
<svg style="left:99.80px;top:55.69px" width="8.30" height="1.51" fill="#333"><circle cx="0.75" cy="0.75" r="0.75"/><circle cx="4.15" cy="0.75" r="0.75"/><circle cx="7.55" cy="0.75" r="0.75"/></svg>
<svg style="left:115.90px;top:49.30px" width="8" height="4.8" viewBox="0 0 8 4.8"><path d="M0 0H8L4.0 4.8Z" fill="#888"/></svg>
<div style="position:absolute;left:140.00px;top:38.00px;width:56.00px;height:23.00px;box-sizing:border-box;background:#e9ecef;border:1px solid #ced4da;border-radius:3px;"></div>
<svg style="left:175.70px;top:46.96px" width="10.8" height="6.48" viewBox="0 0 10.8 6.48"><path d="M0.775 0.775L5.4 5.71L10.025 0.775" fill="none" stroke="#343a40" stroke-width="1.35" stroke-linecap="round" stroke-linejoin="round"/></svg>
<div style="position:absolute;left:197.00px;top:38.00px;width:46.00px;height:23.00px;box-sizing:border-box;background:#e9ecef;border:1px solid #ced4da;border-radius:3px;"></div>
<span style="position:absolute;left:202.16px;top:42.25px;font-size:14px;line-height:1;white-space:pre;color:#212529;">1</span>
<div style="position:absolute;left:252.00px;top:40.00px;width:79.00px;height:22.00px;box-sizing:border-box;background:#fff;border:1px solid #ced4da;border-radius:3px;"></div>
<div style="position:absolute;left:256px;top:42px;width:50.7px;height:18px;overflow:hidden">
<span style="position:absolute;left:1.59px;top:1.77px;font-size:13.5px;line-height:1;white-space:pre;color:#212529;letter-spacing:0.8px;">Cost Center</span>
</div>
<svg style="left:309.90px;top:48.28px" width="10.4" height="6.24" viewBox="0 0 10.4 6.24"><path d="M0.775 0.775L5.2 5.46L9.625 0.775" fill="none" stroke="#343a40" stroke-width="1.35" stroke-linecap="round" stroke-linejoin="round"/></svg>
<div style="position:absolute;left:340.00px;top:38.00px;width:86.00px;height:23.00px;box-sizing:border-box;background:#e9ecef;border:1px solid #ced4da;border-radius:3px;"></div>
<div style="position:absolute;left:435.00px;top:38.00px;width:81.00px;height:23.00px;box-sizing:border-box;background:#e9ecef;border:1px solid #ced4da;border-radius:3px;"></div>
<span style="position:absolute;left:440.79px;top:42.77px;font-size:13.5px;line-height:1;white-space:pre;color:#212529;letter-spacing:0.646px;">0.00</span>
<div style="position:absolute;left:526.00px;top:38.00px;width:123.00px;height:23.00px;box-sizing:border-box;background:#e9ecef;border:1px solid #ced4da;border-radius:3px;"></div>
<span style="position:absolute;left:531.79px;top:42.77px;font-size:13.5px;line-height:1;white-space:pre;color:#212529;letter-spacing:0.646px;">0.00</span>
<div style="position:absolute;left:658.00px;top:38.00px;width:88.00px;height:23.00px;box-sizing:border-box;background:#e9ecef;border:1px solid #ced4da;border-radius:3px;"></div>
<span style="position:absolute;left:663.79px;top:42.77px;font-size:13.5px;line-height:1;white-space:pre;color:#212529;letter-spacing:0.646px;">0.00</span>
<div style="position:absolute;left:756.00px;top:38.00px;width:81.00px;height:23.00px;box-sizing:border-box;background:#e9ecef;border:1px solid #ced4da;border-radius:3px;"></div>
<span style="position:absolute;left:761.79px;top:42.77px;font-size:13.5px;line-height:1;white-space:pre;color:#212529;letter-spacing:0.646px;">0.00</span>
<div style="position:absolute;left:846.00px;top:38.00px;width:99.00px;height:23.00px;box-sizing:border-box;background:#e9ecef;border:1px solid #ced4da;border-radius:3px;"></div>
<span style="position:absolute;left:851.99px;top:42.77px;font-size:13.5px;line-height:1;white-space:pre;color:#212529;letter-spacing:0.646px;">0.00</span>
<div style="position:absolute;left:954.00px;top:38.00px;width:88.00px;height:23.00px;box-sizing:border-box;background:#e9ecef;border:1px solid #ced4da;border-radius:3px;"></div>
<span style="position:absolute;left:959.79px;top:42.77px;font-size:13.5px;line-height:1;white-space:pre;color:#212529;letter-spacing:0.646px;">0.00</span>
<div style="position:absolute;left:1180.00px;top:38.00px;width:116.00px;height:23.00px;box-sizing:border-box;background:#e9ecef;border:1px solid #ced4da;border-radius:3px;"></div>
<span style="position:absolute;left:1186.19px;top:42.77px;font-size:13.5px;line-height:1;white-space:pre;color:#212529;letter-spacing:0.646px;">0.00</span>
<div style="position:absolute;left:1052.00px;top:40.00px;width:46.00px;height:22.00px;box-sizing:border-box;background:#e9ecef;border:1px solid #ced4da;border-radius:3px;"></div>
<div style="position:absolute;left:1056px;top:42px;width:17.8px;height:18px;overflow:hidden">
<span style="position:absolute;left:1.75px;top:2.62px;font-size:12.5px;line-height:1;white-space:pre;color:#212529;letter-spacing:-0.35px;">Exclusive</span>
</div>
<svg style="left:1077.05px;top:48.41px" width="10.3" height="6.18" viewBox="0 0 10.3 6.18"><path d="M0.775 0.775L5.15 5.41L9.525 0.775" fill="none" stroke="#343a40" stroke-width="1.35" stroke-linecap="round" stroke-linejoin="round"/></svg>
<span style="position:absolute;left:8.56px;top:75.15px;font-size:14px;line-height:1;white-space:pre;color:#111;display:inline-block;transform:scaleX(1.15);transform-origin:0 0;">3</span>
<div style="position:absolute;left:30.00px;top:72.00px;width:101.00px;height:22.00px;box-sizing:border-box;background:#fff;border:1px solid #ced4da;border-radius:3px;"></div>
<span style="position:absolute;left:38.13px;top:76.93px;font-size:14.5px;line-height:1;white-space:pre;color:#999;letter-spacing:0.400px;">Select Pr</span>
<svg style="left:99.80px;top:87.69px" width="8.30" height="1.51" fill="#333"><circle cx="0.75" cy="0.75" r="0.75"/><circle cx="4.15" cy="0.75" r="0.75"/><circle cx="7.55" cy="0.75" r="0.75"/></svg>
<svg style="left:115.90px;top:81.30px" width="8" height="4.8" viewBox="0 0 8 4.8"><path d="M0 0H8L4.0 4.8Z" fill="#888"/></svg>
<div style="position:absolute;left:140.00px;top:70.00px;width:56.00px;height:23.00px;box-sizing:border-box;background:#e9ecef;border:1px solid #ced4da;border-radius:3px;"></div>
<svg style="left:175.70px;top:78.96px" width="10.8" height="6.48" viewBox="0 0 10.8 6.48"><path d="M0.775 0.775L5.4 5.71L10.025 0.775" fill="none" stroke="#343a40" stroke-width="1.35" stroke-linecap="round" stroke-linejoin="round"/></svg>
<div style="position:absolute;left:197.00px;top:70.00px;width:46.00px;height:23.00px;box-sizing:border-box;background:#e9ecef;border:1px solid #ced4da;border-radius:3px;"></div>
<span style="position:absolute;left:202.16px;top:74.25px;font-size:14px;line-height:1;white-space:pre;color:#212529;">1</span>
<div style="position:absolute;left:252.00px;top:72.00px;width:79.00px;height:22.00px;box-sizing:border-box;background:#fff;border:1px solid #ced4da;border-radius:3px;"></div>
<div style="position:absolute;left:256px;top:74px;width:50.7px;height:18px;overflow:hidden">
<span style="position:absolute;left:1.59px;top:1.77px;font-size:13.5px;line-height:1;white-space:pre;color:#212529;letter-spacing:0.8px;">Cost Center</span>
</div>
<svg style="left:309.90px;top:80.28px" width="10.4" height="6.24" viewBox="0 0 10.4 6.24"><path d="M0.775 0.775L5.2 5.46L9.625 0.775" fill="none" stroke="#343a40" stroke-width="1.35" stroke-linecap="round" stroke-linejoin="round"/></svg>
<div style="position:absolute;left:340.00px;top:70.00px;width:86.00px;height:23.00px;box-sizing:border-box;background:#e9ecef;border:1px solid #ced4da;border-radius:3px;"></div>
<div style="position:absolute;left:435.00px;top:70.00px;width:81.00px;height:23.00px;box-sizing:border-box;background:#e9ecef;border:1px solid #ced4da;border-radius:3px;"></div>
<span style="position:absolute;left:440.79px;top:74.77px;font-size:13.5px;line-height:1;white-space:pre;color:#212529;letter-spacing:0.646px;">0.00</span>
<div style="position:absolute;left:526.00px;top:70.00px;width:123.00px;height:23.00px;box-sizing:border-box;background:#e9ecef;border:1px solid #ced4da;border-radius:3px;"></div>
<span style="position:absolute;left:531.79px;top:74.77px;font-size:13.5px;line-height:1;white-space:pre;color:#212529;letter-spacing:0.646px;">0.00</span>
<div style="position:absolute;left:658.00px;top:70.00px;width:88.00px;height:23.00px;box-sizing:border-box;background:#e9ecef;border:1px solid #ced4da;border-radius:3px;"></div>
<span style="position:absolute;left:663.79px;top:74.77px;font-size:13.5px;line-height:1;white-space:pre;color:#212529;letter-spacing:0.646px;">0.00</span>
<div style="position:absolute;left:756.00px;top:70.00px;width:81.00px;height:23.00px;box-sizing:border-box;background:#e9ecef;border:1px solid #ced4da;border-radius:3px;"></div>
<span style="position:absolute;left:761.79px;top:74.77px;font-size:13.5px;line-height:1;white-space:pre;color:#212529;letter-spacing:0.646px;">0.00</span>
<div style="position:absolute;left:846.00px;top:70.00px;width:99.00px;height:23.00px;box-sizing:border-box;background:#e9ecef;border:1px solid #ced4da;border-radius:3px;"></div>
<span style="position:absolute;left:851.99px;top:74.77px;font-size:13.5px;line-height:1;white-space:pre;color:#212529;letter-spacing:0.646px;">0.00</span>
<div style="position:absolute;left:954.00px;top:70.00px;width:88.00px;height:23.00px;box-sizing:border-box;background:#e9ecef;border:1px solid #ced4da;border-radius:3px;"></div>
<span style="position:absolute;left:959.79px;top:74.77px;font-size:13.5px;line-height:1;white-space:pre;color:#212529;letter-spacing:0.646px;">0.00</span>
<div style="position:absolute;left:1180.00px;top:70.00px;width:116.00px;height:23.00px;box-sizing:border-box;background:#e9ecef;border:1px solid #ced4da;border-radius:3px;"></div>
<span style="position:absolute;left:1186.19px;top:74.77px;font-size:13.5px;line-height:1;white-space:pre;color:#212529;letter-spacing:0.646px;">0.00</span>
<div style="position:absolute;left:1052.00px;top:72.00px;width:46.00px;height:22.00px;box-sizing:border-box;background:#e9ecef;border:1px solid #ced4da;border-radius:3px;"></div>
<div style="position:absolute;left:1056px;top:74px;width:17.8px;height:18px;overflow:hidden">
<span style="position:absolute;left:1.75px;top:2.62px;font-size:12.5px;line-height:1;white-space:pre;color:#212529;letter-spacing:-0.35px;">Exclusive</span>
</div>
<svg style="left:1077.05px;top:80.41px" width="10.3" height="6.18" viewBox="0 0 10.3 6.18"><path d="M0.775 0.775L5.15 5.41L9.525 0.775" fill="none" stroke="#343a40" stroke-width="1.35" stroke-linecap="round" stroke-linejoin="round"/></svg>
<span style="position:absolute;left:8.56px;top:106.15px;font-size:14px;line-height:1;white-space:pre;color:#111;display:inline-block;transform:scaleX(1.15);transform-origin:0 0;">4</span>
<div style="position:absolute;left:30.00px;top:103.00px;width:101.00px;height:22.00px;box-sizing:border-box;background:#fff;border:1px solid #ced4da;border-radius:3px;"></div>
<span style="position:absolute;left:38.13px;top:107.93px;font-size:14.5px;line-height:1;white-space:pre;color:#999;letter-spacing:0.400px;">Select Pr</span>
<svg style="left:99.80px;top:118.69px" width="8.30" height="1.51" fill="#333"><circle cx="0.75" cy="0.75" r="0.75"/><circle cx="4.15" cy="0.75" r="0.75"/><circle cx="7.55" cy="0.75" r="0.75"/></svg>
<svg style="left:115.90px;top:112.30px" width="8" height="4.8" viewBox="0 0 8 4.8"><path d="M0 0H8L4.0 4.8Z" fill="#888"/></svg>
<div style="position:absolute;left:140.00px;top:102.00px;width:56.00px;height:22.00px;box-sizing:border-box;background:#e9ecef;border:1px solid #ced4da;border-radius:3px;"></div>
<svg style="left:175.70px;top:110.96px" width="10.8" height="6.48" viewBox="0 0 10.8 6.48"><path d="M0.775 0.775L5.4 5.71L10.025 0.775" fill="none" stroke="#343a40" stroke-width="1.35" stroke-linecap="round" stroke-linejoin="round"/></svg>
<div style="position:absolute;left:197.00px;top:102.00px;width:46.00px;height:22.00px;box-sizing:border-box;background:#e9ecef;border:1px solid #ced4da;border-radius:3px;"></div>
<span style="position:absolute;left:202.16px;top:105.25px;font-size:14px;line-height:1;white-space:pre;color:#212529;">1</span>
<div style="position:absolute;left:252.00px;top:103.00px;width:79.00px;height:22.00px;box-sizing:border-box;background:#fff;border:1px solid #ced4da;border-radius:3px;"></div>
<div style="position:absolute;left:256px;top:105px;width:50.7px;height:18px;overflow:hidden">
<span style="position:absolute;left:1.59px;top:1.77px;font-size:13.5px;line-height:1;white-space:pre;color:#212529;letter-spacing:0.8px;">Cost Center</span>
</div>
<svg style="left:309.90px;top:111.28px" width="10.4" height="6.24" viewBox="0 0 10.4 6.24"><path d="M0.775 0.775L5.2 5.46L9.625 0.775" fill="none" stroke="#343a40" stroke-width="1.35" stroke-linecap="round" stroke-linejoin="round"/></svg>
<div style="position:absolute;left:340.00px;top:102.00px;width:86.00px;height:22.00px;box-sizing:border-box;background:#e9ecef;border:1px solid #ced4da;border-radius:3px;"></div>
<div style="position:absolute;left:435.00px;top:102.00px;width:81.00px;height:22.00px;box-sizing:border-box;background:#e9ecef;border:1px solid #ced4da;border-radius:3px;"></div>
<span style="position:absolute;left:440.79px;top:105.77px;font-size:13.5px;line-height:1;white-space:pre;color:#212529;letter-spacing:0.646px;">0.00</span>
<div style="position:absolute;left:526.00px;top:102.00px;width:123.00px;height:22.00px;box-sizing:border-box;background:#e9ecef;border:1px solid #ced4da;border-radius:3px;"></div>
<span style="position:absolute;left:531.79px;top:105.77px;font-size:13.5px;line-height:1;white-space:pre;color:#212529;letter-spacing:0.646px;">0.00</span>
<div style="position:absolute;left:658.00px;top:102.00px;width:88.00px;height:22.00px;box-sizing:border-box;background:#e9ecef;border:1px solid #ced4da;border-radius:3px;"></div>
<span style="position:absolute;left:663.79px;top:105.77px;font-size:13.5px;line-height:1;white-space:pre;color:#212529;letter-spacing:0.646px;">0.00</span>
<div style="position:absolute;left:756.00px;top:102.00px;width:81.00px;height:22.00px;box-sizing:border-box;background:#e9ecef;border:1px solid #ced4da;border-radius:3px;"></div>
<span style="position:absolute;left:761.79px;top:105.77px;font-size:13.5px;line-height:1;white-space:pre;color:#212529;letter-spacing:0.646px;">0.00</span>
<div style="position:absolute;left:846.00px;top:102.00px;width:99.00px;height:22.00px;box-sizing:border-box;background:#e9ecef;border:1px solid #ced4da;border-radius:3px;"></div>
<span style="position:absolute;left:851.99px;top:105.77px;font-size:13.5px;line-height:1;white-space:pre;color:#212529;letter-spacing:0.646px;">0.00</span>
<div style="position:absolute;left:954.00px;top:102.00px;width:88.00px;height:22.00px;box-sizing:border-box;background:#e9ecef;border:1px solid #ced4da;border-radius:3px;"></div>
<span style="position:absolute;left:959.79px;top:105.77px;font-size:13.5px;line-height:1;white-space:pre;color:#212529;letter-spacing:0.646px;">0.00</span>
<div style="position:absolute;left:1180.00px;top:102.00px;width:116.00px;height:22.00px;box-sizing:border-box;background:#e9ecef;border:1px solid #ced4da;border-radius:3px;"></div>
<span style="position:absolute;left:1186.19px;top:105.77px;font-size:13.5px;line-height:1;white-space:pre;color:#212529;letter-spacing:0.646px;">0.00</span>
<div style="position:absolute;left:1052.00px;top:103.00px;width:46.00px;height:22.00px;box-sizing:border-box;background:#e9ecef;border:1px solid #ced4da;border-radius:3px;"></div>
<div style="position:absolute;left:1056px;top:105px;width:17.8px;height:18px;overflow:hidden">
<span style="position:absolute;left:1.75px;top:2.62px;font-size:12.5px;line-height:1;white-space:pre;color:#212529;letter-spacing:-0.35px;">Exclusive</span>
</div>
<svg style="left:1077.05px;top:111.41px" width="10.3" height="6.18" viewBox="0 0 10.3 6.18"><path d="M0.775 0.775L5.15 5.41L9.525 0.775" fill="none" stroke="#343a40" stroke-width="1.35" stroke-linecap="round" stroke-linejoin="round"/></svg>
<span style="position:absolute;left:8.56px;top:138.15px;font-size:14px;line-height:1;white-space:pre;color:#111;display:inline-block;transform:scaleX(1.15);transform-origin:0 0;">5</span>
<div style="position:absolute;left:30.00px;top:135.00px;width:101.00px;height:22.00px;box-sizing:border-box;background:#fff;border:1px solid #ced4da;border-radius:3px;"></div>
<span style="position:absolute;left:38.13px;top:139.93px;font-size:14.5px;line-height:1;white-space:pre;color:#999;letter-spacing:0.400px;">Select Pr</span>
<svg style="left:99.80px;top:150.69px" width="8.30" height="1.51" fill="#333"><circle cx="0.75" cy="0.75" r="0.75"/><circle cx="4.15" cy="0.75" r="0.75"/><circle cx="7.55" cy="0.75" r="0.75"/></svg>
<svg style="left:115.90px;top:144.30px" width="8" height="4.8" viewBox="0 0 8 4.8"><path d="M0 0H8L4.0 4.8Z" fill="#888"/></svg>
<div style="position:absolute;left:140.00px;top:134.00px;width:56.00px;height:22.00px;box-sizing:border-box;background:#e9ecef;border:1px solid #ced4da;border-radius:3px;"></div>
<svg style="left:175.70px;top:142.96px" width="10.8" height="6.48" viewBox="0 0 10.8 6.48"><path d="M0.775 0.775L5.4 5.71L10.025 0.775" fill="none" stroke="#343a40" stroke-width="1.35" stroke-linecap="round" stroke-linejoin="round"/></svg>
<div style="position:absolute;left:197.00px;top:134.00px;width:46.00px;height:22.00px;box-sizing:border-box;background:#e9ecef;border:1px solid #ced4da;border-radius:3px;"></div>
<span style="position:absolute;left:202.16px;top:137.25px;font-size:14px;line-height:1;white-space:pre;color:#212529;">1</span>
<div style="position:absolute;left:252.00px;top:135.00px;width:79.00px;height:22.00px;box-sizing:border-box;background:#fff;border:1px solid #ced4da;border-radius:3px;"></div>
<div style="position:absolute;left:256px;top:137px;width:50.7px;height:18px;overflow:hidden">
<span style="position:absolute;left:1.59px;top:1.77px;font-size:13.5px;line-height:1;white-space:pre;color:#212529;letter-spacing:0.8px;">Cost Center</span>
</div>
<svg style="left:309.90px;top:143.28px" width="10.4" height="6.24" viewBox="0 0 10.4 6.24"><path d="M0.775 0.775L5.2 5.46L9.625 0.775" fill="none" stroke="#343a40" stroke-width="1.35" stroke-linecap="round" stroke-linejoin="round"/></svg>
<div style="position:absolute;left:340.00px;top:134.00px;width:86.00px;height:22.00px;box-sizing:border-box;background:#e9ecef;border:1px solid #ced4da;border-radius:3px;"></div>
<div style="position:absolute;left:435.00px;top:134.00px;width:81.00px;height:22.00px;box-sizing:border-box;background:#e9ecef;border:1px solid #ced4da;border-radius:3px;"></div>
<span style="position:absolute;left:440.79px;top:137.77px;font-size:13.5px;line-height:1;white-space:pre;color:#212529;letter-spacing:0.646px;">0.00</span>
<div style="position:absolute;left:526.00px;top:134.00px;width:123.00px;height:22.00px;box-sizing:border-box;background:#e9ecef;border:1px solid #ced4da;border-radius:3px;"></div>
<span style="position:absolute;left:531.79px;top:137.77px;font-size:13.5px;line-height:1;white-space:pre;color:#212529;letter-spacing:0.646px;">0.00</span>
<div style="position:absolute;left:658.00px;top:134.00px;width:88.00px;height:22.00px;box-sizing:border-box;background:#e9ecef;border:1px solid #ced4da;border-radius:3px;"></div>
<span style="position:absolute;left:663.79px;top:137.77px;font-size:13.5px;line-height:1;white-space:pre;color:#212529;letter-spacing:0.646px;">0.00</span>
<div style="position:absolute;left:756.00px;top:134.00px;width:81.00px;height:22.00px;box-sizing:border-box;background:#e9ecef;border:1px solid #ced4da;border-radius:3px;"></div>
<span style="position:absolute;left:761.79px;top:137.77px;font-size:13.5px;line-height:1;white-space:pre;color:#212529;letter-spacing:0.646px;">0.00</span>
<div style="position:absolute;left:846.00px;top:134.00px;width:99.00px;height:22.00px;box-sizing:border-box;background:#e9ecef;border:1px solid #ced4da;border-radius:3px;"></div>
<span style="position:absolute;left:851.99px;top:137.77px;font-size:13.5px;line-height:1;white-space:pre;color:#212529;letter-spacing:0.646px;">0.00</span>
<div style="position:absolute;left:954.00px;top:134.00px;width:88.00px;height:22.00px;box-sizing:border-box;background:#e9ecef;border:1px solid #ced4da;border-radius:3px;"></div>
<span style="position:absolute;left:959.79px;top:137.77px;font-size:13.5px;line-height:1;white-space:pre;color:#212529;letter-spacing:0.646px;">0.00</span>
<div style="position:absolute;left:1180.00px;top:134.00px;width:116.00px;height:22.00px;box-sizing:border-box;background:#e9ecef;border:1px solid #ced4da;border-radius:3px;"></div>
<span style="position:absolute;left:1186.19px;top:137.77px;font-size:13.5px;line-height:1;white-space:pre;color:#212529;letter-spacing:0.646px;">0.00</span>
<div style="position:absolute;left:1052.00px;top:135.00px;width:46.00px;height:22.00px;box-sizing:border-box;background:#e9ecef;border:1px solid #ced4da;border-radius:3px;"></div>
<div style="position:absolute;left:1056px;top:137px;width:17.8px;height:18px;overflow:hidden">
<span style="position:absolute;left:1.75px;top:2.62px;font-size:12.5px;line-height:1;white-space:pre;color:#212529;letter-spacing:-0.35px;">Exclusive</span>
</div>
<svg style="left:1077.05px;top:143.41px" width="10.3" height="6.18" viewBox="0 0 10.3 6.18"><path d="M0.775 0.775L5.15 5.41L9.525 0.775" fill="none" stroke="#343a40" stroke-width="1.35" stroke-linecap="round" stroke-linejoin="round"/></svg>
<span style="position:absolute;left:8.56px;top:170.15px;font-size:14px;line-height:1;white-space:pre;color:#111;display:inline-block;transform:scaleX(1.15);transform-origin:0 0;">6</span>
<div style="position:absolute;left:30.00px;top:167.00px;width:101.00px;height:22.00px;box-sizing:border-box;background:#fff;border:1px solid #ced4da;border-radius:3px;"></div>
<span style="position:absolute;left:38.13px;top:171.93px;font-size:14.5px;line-height:1;white-space:pre;color:#999;letter-spacing:0.400px;">Select Pr</span>
<svg style="left:99.80px;top:182.69px" width="8.30" height="1.51" fill="#333"><circle cx="0.75" cy="0.75" r="0.75"/><circle cx="4.15" cy="0.75" r="0.75"/><circle cx="7.55" cy="0.75" r="0.75"/></svg>
<svg style="left:115.90px;top:176.30px" width="8" height="4.8" viewBox="0 0 8 4.8"><path d="M0 0H8L4.0 4.8Z" fill="#888"/></svg>
<div style="position:absolute;left:140.00px;top:166.00px;width:56.00px;height:22.00px;box-sizing:border-box;background:#e9ecef;border:1px solid #ced4da;border-radius:3px;"></div>
<svg style="left:175.70px;top:174.96px" width="10.8" height="6.48" viewBox="0 0 10.8 6.48"><path d="M0.775 0.775L5.4 5.71L10.025 0.775" fill="none" stroke="#343a40" stroke-width="1.35" stroke-linecap="round" stroke-linejoin="round"/></svg>
<div style="position:absolute;left:197.00px;top:166.00px;width:46.00px;height:22.00px;box-sizing:border-box;background:#e9ecef;border:1px solid #ced4da;border-radius:3px;"></div>
<span style="position:absolute;left:202.16px;top:169.25px;font-size:14px;line-height:1;white-space:pre;color:#212529;">1</span>
<div style="position:absolute;left:252.00px;top:167.00px;width:79.00px;height:22.00px;box-sizing:border-box;background:#fff;border:1px solid #ced4da;border-radius:3px;"></div>
<div style="position:absolute;left:256px;top:169px;width:50.7px;height:18px;overflow:hidden">
<span style="position:absolute;left:1.59px;top:1.77px;font-size:13.5px;line-height:1;white-space:pre;color:#212529;letter-spacing:0.8px;">Cost Center</span>
</div>
<svg style="left:309.90px;top:175.28px" width="10.4" height="6.24" viewBox="0 0 10.4 6.24"><path d="M0.775 0.775L5.2 5.46L9.625 0.775" fill="none" stroke="#343a40" stroke-width="1.35" stroke-linecap="round" stroke-linejoin="round"/></svg>
<div style="position:absolute;left:340.00px;top:166.00px;width:86.00px;height:22.00px;box-sizing:border-box;background:#e9ecef;border:1px solid #ced4da;border-radius:3px;"></div>
<div style="position:absolute;left:435.00px;top:166.00px;width:81.00px;height:22.00px;box-sizing:border-box;background:#e9ecef;border:1px solid #ced4da;border-radius:3px;"></div>
<span style="position:absolute;left:440.79px;top:169.77px;font-size:13.5px;line-height:1;white-space:pre;color:#212529;letter-spacing:0.646px;">0.00</span>
<div style="position:absolute;left:526.00px;top:166.00px;width:123.00px;height:22.00px;box-sizing:border-box;background:#e9ecef;border:1px solid #ced4da;border-radius:3px;"></div>
<span style="position:absolute;left:531.79px;top:169.77px;font-size:13.5px;line-height:1;white-space:pre;color:#212529;letter-spacing:0.646px;">0.00</span>
<div style="position:absolute;left:658.00px;top:166.00px;width:88.00px;height:22.00px;box-sizing:border-box;background:#e9ecef;border:1px solid #ced4da;border-radius:3px;"></div>
<span style="position:absolute;left:663.79px;top:169.77px;font-size:13.5px;line-height:1;white-space:pre;color:#212529;letter-spacing:0.646px;">0.00</span>
<div style="position:absolute;left:756.00px;top:166.00px;width:81.00px;height:22.00px;box-sizing:border-box;background:#e9ecef;border:1px solid #ced4da;border-radius:3px;"></div>
<span style="position:absolute;left:761.79px;top:169.77px;font-size:13.5px;line-height:1;white-space:pre;color:#212529;letter-spacing:0.646px;">0.00</span>
<div style="position:absolute;left:846.00px;top:166.00px;width:99.00px;height:22.00px;box-sizing:border-box;background:#e9ecef;border:1px solid #ced4da;border-radius:3px;"></div>
<span style="position:absolute;left:851.99px;top:169.77px;font-size:13.5px;line-height:1;white-space:pre;color:#212529;letter-spacing:0.646px;">0.00</span>
<div style="position:absolute;left:954.00px;top:166.00px;width:88.00px;height:22.00px;box-sizing:border-box;background:#e9ecef;border:1px solid #ced4da;border-radius:3px;"></div>
<span style="position:absolute;left:959.79px;top:169.77px;font-size:13.5px;line-height:1;white-space:pre;color:#212529;letter-spacing:0.646px;">0.00</span>
<div style="position:absolute;left:1180.00px;top:166.00px;width:116.00px;height:22.00px;box-sizing:border-box;background:#e9ecef;border:1px solid #ced4da;border-radius:3px;"></div>
<span style="position:absolute;left:1186.19px;top:169.77px;font-size:13.5px;line-height:1;white-space:pre;color:#212529;letter-spacing:0.646px;">0.00</span>
<div style="position:absolute;left:1052.00px;top:167.00px;width:46.00px;height:22.00px;box-sizing:border-box;background:#e9ecef;border:1px solid #ced4da;border-radius:3px;"></div>
<div style="position:absolute;left:1056px;top:169px;width:17.8px;height:18px;overflow:hidden">
<span style="position:absolute;left:1.75px;top:2.62px;font-size:12.5px;line-height:1;white-space:pre;color:#212529;letter-spacing:-0.35px;">Exclusive</span>
</div>
<svg style="left:1077.05px;top:175.41px" width="10.3" height="6.18" viewBox="0 0 10.3 6.18"><path d="M0.775 0.775L5.15 5.41L9.525 0.775" fill="none" stroke="#343a40" stroke-width="1.35" stroke-linecap="round" stroke-linejoin="round"/></svg>
<span style="position:absolute;left:8.56px;top:202.15px;font-size:14px;line-height:1;white-space:pre;color:#111;display:inline-block;transform:scaleX(1.15);transform-origin:0 0;">7</span>
<div style="position:absolute;left:30.00px;top:199.00px;width:101.00px;height:22.00px;box-sizing:border-box;background:#fff;border:1px solid #ced4da;border-radius:3px;"></div>
<span style="position:absolute;left:38.13px;top:203.93px;font-size:14.5px;line-height:1;white-space:pre;color:#999;letter-spacing:0.400px;">Select Pr</span>
<svg style="left:99.80px;top:214.69px" width="8.30" height="1.51" fill="#333"><circle cx="0.75" cy="0.75" r="0.75"/><circle cx="4.15" cy="0.75" r="0.75"/><circle cx="7.55" cy="0.75" r="0.75"/></svg>
<svg style="left:115.90px;top:208.30px" width="8" height="4.8" viewBox="0 0 8 4.8"><path d="M0 0H8L4.0 4.8Z" fill="#888"/></svg>
<div style="position:absolute;left:140.00px;top:197.00px;width:56.00px;height:23.00px;box-sizing:border-box;background:#e9ecef;border:1px solid #ced4da;border-radius:3px;"></div>
<svg style="left:175.70px;top:205.96px" width="10.8" height="6.48" viewBox="0 0 10.8 6.48"><path d="M0.775 0.775L5.4 5.71L10.025 0.775" fill="none" stroke="#343a40" stroke-width="1.35" stroke-linecap="round" stroke-linejoin="round"/></svg>
<div style="position:absolute;left:197.00px;top:197.00px;width:46.00px;height:23.00px;box-sizing:border-box;background:#e9ecef;border:1px solid #ced4da;border-radius:3px;"></div>
<span style="position:absolute;left:202.16px;top:201.25px;font-size:14px;line-height:1;white-space:pre;color:#212529;">1</span>
<div style="position:absolute;left:252.00px;top:199.00px;width:79.00px;height:22.00px;box-sizing:border-box;background:#fff;border:1px solid #ced4da;border-radius:3px;"></div>
<div style="position:absolute;left:256px;top:201px;width:50.7px;height:18px;overflow:hidden">
<span style="position:absolute;left:1.59px;top:1.77px;font-size:13.5px;line-height:1;white-space:pre;color:#212529;letter-spacing:0.8px;">Cost Center</span>
</div>
<svg style="left:309.90px;top:207.28px" width="10.4" height="6.24" viewBox="0 0 10.4 6.24"><path d="M0.775 0.775L5.2 5.46L9.625 0.775" fill="none" stroke="#343a40" stroke-width="1.35" stroke-linecap="round" stroke-linejoin="round"/></svg>
<div style="position:absolute;left:340.00px;top:197.00px;width:86.00px;height:23.00px;box-sizing:border-box;background:#e9ecef;border:1px solid #ced4da;border-radius:3px;"></div>
<div style="position:absolute;left:435.00px;top:197.00px;width:81.00px;height:23.00px;box-sizing:border-box;background:#e9ecef;border:1px solid #ced4da;border-radius:3px;"></div>
<span style="position:absolute;left:440.79px;top:201.77px;font-size:13.5px;line-height:1;white-space:pre;color:#212529;letter-spacing:0.646px;">0.00</span>
<div style="position:absolute;left:526.00px;top:197.00px;width:123.00px;height:23.00px;box-sizing:border-box;background:#e9ecef;border:1px solid #ced4da;border-radius:3px;"></div>
<span style="position:absolute;left:531.79px;top:201.77px;font-size:13.5px;line-height:1;white-space:pre;color:#212529;letter-spacing:0.646px;">0.00</span>
<div style="position:absolute;left:658.00px;top:197.00px;width:88.00px;height:23.00px;box-sizing:border-box;background:#e9ecef;border:1px solid #ced4da;border-radius:3px;"></div>
<span style="position:absolute;left:663.79px;top:201.77px;font-size:13.5px;line-height:1;white-space:pre;color:#212529;letter-spacing:0.646px;">0.00</span>
<div style="position:absolute;left:756.00px;top:197.00px;width:81.00px;height:23.00px;box-sizing:border-box;background:#e9ecef;border:1px solid #ced4da;border-radius:3px;"></div>
<span style="position:absolute;left:761.79px;top:201.77px;font-size:13.5px;line-height:1;white-space:pre;color:#212529;letter-spacing:0.646px;">0.00</span>
<div style="position:absolute;left:846.00px;top:197.00px;width:99.00px;height:23.00px;box-sizing:border-box;background:#e9ecef;border:1px solid #ced4da;border-radius:3px;"></div>
<span style="position:absolute;left:851.99px;top:201.77px;font-size:13.5px;line-height:1;white-space:pre;color:#212529;letter-spacing:0.646px;">0.00</span>
<div style="position:absolute;left:954.00px;top:197.00px;width:88.00px;height:23.00px;box-sizing:border-box;background:#e9ecef;border:1px solid #ced4da;border-radius:3px;"></div>
<span style="position:absolute;left:959.79px;top:201.77px;font-size:13.5px;line-height:1;white-space:pre;color:#212529;letter-spacing:0.646px;">0.00</span>
<div style="position:absolute;left:1180.00px;top:197.00px;width:116.00px;height:23.00px;box-sizing:border-box;background:#e9ecef;border:1px solid #ced4da;border-radius:3px;"></div>
<span style="position:absolute;left:1186.19px;top:201.77px;font-size:13.5px;line-height:1;white-space:pre;color:#212529;letter-spacing:0.646px;">0.00</span>
<div style="position:absolute;left:1052.00px;top:199.00px;width:46.00px;height:22.00px;box-sizing:border-box;background:#e9ecef;border:1px solid #ced4da;border-radius:3px;"></div>
<div style="position:absolute;left:1056px;top:201px;width:17.8px;height:18px;overflow:hidden">
<span style="position:absolute;left:1.75px;top:2.62px;font-size:12.5px;line-height:1;white-space:pre;color:#212529;letter-spacing:-0.35px;">Exclusive</span>
</div>
<svg style="left:1077.05px;top:207.41px" width="10.3" height="6.18" viewBox="0 0 10.3 6.18"><path d="M0.775 0.775L5.15 5.41L9.525 0.775" fill="none" stroke="#343a40" stroke-width="1.35" stroke-linecap="round" stroke-linejoin="round"/></svg>
<span style="position:absolute;left:8.56px;top:234.15px;font-size:14px;line-height:1;white-space:pre;color:#111;display:inline-block;transform:scaleX(1.15);transform-origin:0 0;">8</span>
<div style="position:absolute;left:30.00px;top:231.00px;width:101.00px;height:22.00px;box-sizing:border-box;background:#fff;border:1px solid #ced4da;border-radius:3px;"></div>
<span style="position:absolute;left:38.13px;top:235.93px;font-size:14.5px;line-height:1;white-space:pre;color:#999;letter-spacing:0.400px;">Select Pr</span>
<svg style="left:99.80px;top:246.69px" width="8.30" height="1.51" fill="#333"><circle cx="0.75" cy="0.75" r="0.75"/><circle cx="4.15" cy="0.75" r="0.75"/><circle cx="7.55" cy="0.75" r="0.75"/></svg>
<svg style="left:115.90px;top:240.30px" width="8" height="4.8" viewBox="0 0 8 4.8"><path d="M0 0H8L4.0 4.8Z" fill="#888"/></svg>
<div style="position:absolute;left:140.00px;top:229.00px;width:56.00px;height:23.00px;box-sizing:border-box;background:#e9ecef;border:1px solid #ced4da;border-radius:3px;"></div>
<svg style="left:175.70px;top:237.96px" width="10.8" height="6.48" viewBox="0 0 10.8 6.48"><path d="M0.775 0.775L5.4 5.71L10.025 0.775" fill="none" stroke="#343a40" stroke-width="1.35" stroke-linecap="round" stroke-linejoin="round"/></svg>
<div style="position:absolute;left:197.00px;top:229.00px;width:46.00px;height:23.00px;box-sizing:border-box;background:#e9ecef;border:1px solid #ced4da;border-radius:3px;"></div>
<span style="position:absolute;left:202.16px;top:233.25px;font-size:14px;line-height:1;white-space:pre;color:#212529;">1</span>
<div style="position:absolute;left:252.00px;top:231.00px;width:79.00px;height:22.00px;box-sizing:border-box;background:#fff;border:1px solid #ced4da;border-radius:3px;"></div>
<div style="position:absolute;left:256px;top:233px;width:50.7px;height:18px;overflow:hidden">
<span style="position:absolute;left:1.59px;top:1.77px;font-size:13.5px;line-height:1;white-space:pre;color:#212529;letter-spacing:0.8px;">Cost Center</span>
</div>
<svg style="left:309.90px;top:239.28px" width="10.4" height="6.24" viewBox="0 0 10.4 6.24"><path d="M0.775 0.775L5.2 5.46L9.625 0.775" fill="none" stroke="#343a40" stroke-width="1.35" stroke-linecap="round" stroke-linejoin="round"/></svg>
<div style="position:absolute;left:340.00px;top:229.00px;width:86.00px;height:23.00px;box-sizing:border-box;background:#e9ecef;border:1px solid #ced4da;border-radius:3px;"></div>
<div style="position:absolute;left:435.00px;top:229.00px;width:81.00px;height:23.00px;box-sizing:border-box;background:#e9ecef;border:1px solid #ced4da;border-radius:3px;"></div>
<span style="position:absolute;left:440.79px;top:233.77px;font-size:13.5px;line-height:1;white-space:pre;color:#212529;letter-spacing:0.646px;">0.00</span>
<div style="position:absolute;left:526.00px;top:229.00px;width:123.00px;height:23.00px;box-sizing:border-box;background:#e9ecef;border:1px solid #ced4da;border-radius:3px;"></div>
<span style="position:absolute;left:531.79px;top:233.77px;font-size:13.5px;line-height:1;white-space:pre;color:#212529;letter-spacing:0.646px;">0.00</span>
<div style="position:absolute;left:658.00px;top:229.00px;width:88.00px;height:23.00px;box-sizing:border-box;background:#e9ecef;border:1px solid #ced4da;border-radius:3px;"></div>
<span style="position:absolute;left:663.79px;top:233.77px;font-size:13.5px;line-height:1;white-space:pre;color:#212529;letter-spacing:0.646px;">0.00</span>
<div style="position:absolute;left:756.00px;top:229.00px;width:81.00px;height:23.00px;box-sizing:border-box;background:#e9ecef;border:1px solid #ced4da;border-radius:3px;"></div>
<span style="position:absolute;left:761.79px;top:233.77px;font-size:13.5px;line-height:1;white-space:pre;color:#212529;letter-spacing:0.646px;">0.00</span>
<div style="position:absolute;left:846.00px;top:229.00px;width:99.00px;height:23.00px;box-sizing:border-box;background:#e9ecef;border:1px solid #ced4da;border-radius:3px;"></div>
<span style="position:absolute;left:851.99px;top:233.77px;font-size:13.5px;line-height:1;white-space:pre;color:#212529;letter-spacing:0.646px;">0.00</span>
<div style="position:absolute;left:954.00px;top:229.00px;width:88.00px;height:23.00px;box-sizing:border-box;background:#e9ecef;border:1px solid #ced4da;border-radius:3px;"></div>
<span style="position:absolute;left:959.79px;top:233.77px;font-size:13.5px;line-height:1;white-space:pre;color:#212529;letter-spacing:0.646px;">0.00</span>
<div style="position:absolute;left:1180.00px;top:229.00px;width:116.00px;height:23.00px;box-sizing:border-box;background:#e9ecef;border:1px solid #ced4da;border-radius:3px;"></div>
<span style="position:absolute;left:1186.19px;top:233.77px;font-size:13.5px;line-height:1;white-space:pre;color:#212529;letter-spacing:0.646px;">0.00</span>
<div style="position:absolute;left:1052.00px;top:231.00px;width:46.00px;height:22.00px;box-sizing:border-box;background:#e9ecef;border:1px solid #ced4da;border-radius:3px;"></div>
<div style="position:absolute;left:1056px;top:233px;width:17.8px;height:18px;overflow:hidden">
<span style="position:absolute;left:1.75px;top:2.62px;font-size:12.5px;line-height:1;white-space:pre;color:#212529;letter-spacing:-0.35px;">Exclusive</span>
</div>
<svg style="left:1077.05px;top:239.41px" width="10.3" height="6.18" viewBox="0 0 10.3 6.18"><path d="M0.775 0.775L5.15 5.41L9.525 0.775" fill="none" stroke="#343a40" stroke-width="1.35" stroke-linecap="round" stroke-linejoin="round"/></svg>
</div>
<div style="position:absolute;left:234.00px;top:540.00px;width:1306.00px;height:260.00px;box-sizing:border-box;background:#fff;"></div>
<div style="position:absolute;left:241.00px;top:559.00px;width:1299.00px;height:1.00px;box-sizing:border-box;background:#bababa;"></div>
<div style="position:absolute;left:240.00px;top:568.00px;width:132.00px;height:32.00px;box-sizing:border-box;background:#f4f5f3;border:1px solid #d9d6d6;"></div>
<div style="position:absolute;left:371.00px;top:568.00px;width:198.00px;height:32.00px;box-sizing:border-box;background:#fff;border:1px solid #d9d6d6;"></div>
<span style="position:absolute;left:246.16px;top:575.65px;font-size:14px;line-height:1;white-space:pre;color:#111;letter-spacing:1.220px;-webkit-text-stroke:0.15px #111;">Quantity</span>
<span style="position:absolute;left:364.16px;top:576.35px;font-size:14px;line-height:1;white-space:pre;color:#111;">:</span>
<div style="position:absolute;left:377.00px;top:573.00px;width:186.00px;height:23.00px;box-sizing:border-box;background:#e9ecef;border:1px solid #ced4da;border-radius:3px;"></div>
<span style="position:absolute;left:383.39px;top:577.17px;font-size:13.5px;line-height:1;white-space:pre;color:#212529;letter-spacing:0.713px;">0.00</span>
<div style="position:absolute;left:240.00px;top:599.00px;width:132.00px;height:33.00px;box-sizing:border-box;background:#f4f5f3;border:1px solid #d9d6d6;"></div>
<div style="position:absolute;left:371.00px;top:599.00px;width:198.00px;height:33.00px;box-sizing:border-box;background:#fff;border:1px solid #d9d6d6;"></div>
<span style="position:absolute;left:246.16px;top:606.65px;font-size:14px;line-height:1;white-space:pre;color:#111;letter-spacing:0.983px;-webkit-text-stroke:0.15px #111;">Maximum Disco</span>
<svg style="left:357.20px;top:617.04px" width="8.00" height="1.46" fill="#111"><circle cx="0.73" cy="0.73" r="0.73"/><circle cx="4.00" cy="0.73" r="0.73"/><circle cx="7.27" cy="0.73" r="0.73"/></svg>
<span style="position:absolute;left:365.36px;top:607.05px;font-size:14px;line-height:1;white-space:pre;color:#111;">:</span>
<div style="position:absolute;left:377.00px;top:604.00px;width:186.00px;height:23.00px;box-sizing:border-box;background:#fff;border:1px solid #ced4da;border-radius:3px;"></div>
<span style="position:absolute;left:383.39px;top:608.17px;font-size:13.5px;line-height:1;white-space:pre;color:#212529;letter-spacing:0.713px;">0.00</span>
<div style="position:absolute;left:240.00px;top:631.00px;width:132.00px;height:32.00px;box-sizing:border-box;background:#f4f5f3;border:1px solid #d9d6d6;"></div>
<div style="position:absolute;left:371.00px;top:631.00px;width:198.00px;height:32.00px;box-sizing:border-box;background:#fff;border:1px solid #d9d6d6;"></div>
<span style="position:absolute;left:246.16px;top:638.65px;font-size:14px;line-height:1;white-space:pre;color:#111;letter-spacing:0.682px;-webkit-text-stroke:0.15px #111;">Othr Chrg. Note</span>
<span style="position:absolute;left:364.16px;top:639.35px;font-size:14px;line-height:1;white-space:pre;color:#111;">:</span>
<div style="position:absolute;left:377.00px;top:636.00px;width:186.00px;height:23.00px;box-sizing:border-box;background:#fff;border:1px solid #ced4da;border-radius:3px;"></div>
<div style="position:absolute;left:240.00px;top:662.00px;width:132.00px;height:33.00px;box-sizing:border-box;background:#f4f5f3;border:1px solid #d9d6d6;"></div>
<div style="position:absolute;left:371.00px;top:662.00px;width:198.00px;height:33.00px;box-sizing:border-box;background:#fff;border:1px solid #d9d6d6;"></div>
<span style="position:absolute;left:246.16px;top:669.65px;font-size:14px;line-height:1;white-space:pre;color:#111;letter-spacing:0.774px;-webkit-text-stroke:0.15px #111;">Allowance (TK)</span>
<span style="position:absolute;left:364.16px;top:670.35px;font-size:14px;line-height:1;white-space:pre;color:#111;">:</span>
<div style="position:absolute;left:377.00px;top:667.00px;width:186.00px;height:23.00px;box-sizing:border-box;background:#fff;border:1px solid #ced4da;border-radius:3px;"></div>
<span style="position:absolute;left:383.39px;top:671.17px;font-size:13.5px;line-height:1;white-space:pre;color:#212529;letter-spacing:0.713px;">0.00</span>
<div style="position:absolute;left:568.00px;top:568.00px;width:132.00px;height:32.00px;box-sizing:border-box;background:#f4f5f3;border:1px solid #d9d6d6;"></div>
<div style="position:absolute;left:699.00px;top:568.00px;width:199.00px;height:32.00px;box-sizing:border-box;background:#fff;border:1px solid #d9d6d6;"></div>
<span style="position:absolute;left:574.56px;top:575.65px;font-size:14px;line-height:1;white-space:pre;color:#111;letter-spacing:1.076px;-webkit-text-stroke:0.15px #111;">Grand Total</span>
<span style="position:absolute;left:692.56px;top:576.35px;font-size:14px;line-height:1;white-space:pre;color:#111;">:</span>
<div style="position:absolute;left:705.00px;top:573.00px;width:187.00px;height:23.00px;box-sizing:border-box;background:#e9ecef;border:1px solid #ced4da;border-radius:3px;"></div>
<span style="position:absolute;left:711.79px;top:577.17px;font-size:13.5px;line-height:1;white-space:pre;color:#212529;letter-spacing:0.713px;">0.00</span>
<div style="position:absolute;left:568.00px;top:599.00px;width:132.00px;height:33.00px;box-sizing:border-box;background:#f4f5f3;border:1px solid #d9d6d6;"></div>
<div style="position:absolute;left:699.00px;top:599.00px;width:199.00px;height:33.00px;box-sizing:border-box;background:#fff;border:1px solid #d9d6d6;"></div>
<span style="position:absolute;left:574.56px;top:606.65px;font-size:14px;line-height:1;white-space:pre;color:#111;letter-spacing:0.857px;-webkit-text-stroke:0.15px #111;">Sub Total</span>
<span style="position:absolute;left:692.56px;top:607.35px;font-size:14px;line-height:1;white-space:pre;color:#111;">:</span>
<div style="position:absolute;left:705.00px;top:604.00px;width:187.00px;height:23.00px;box-sizing:border-box;background:#e9ecef;border:1px solid #ced4da;border-radius:3px;"></div>
<span style="position:absolute;left:711.79px;top:608.17px;font-size:13.5px;line-height:1;white-space:pre;color:#212529;letter-spacing:0.713px;">0.00</span>
<div style="position:absolute;left:568.00px;top:631.00px;width:132.00px;height:32.00px;box-sizing:border-box;background:#f4f5f3;border:1px solid #d9d6d6;"></div>
<div style="position:absolute;left:699.00px;top:631.00px;width:199.00px;height:32.00px;box-sizing:border-box;background:#fff;border:1px solid #d9d6d6;"></div>
<span style="position:absolute;left:574.56px;top:638.65px;font-size:14px;line-height:1;white-space:pre;color:#111;letter-spacing:0.644px;-webkit-text-stroke:0.15px #111;">Total Expense</span>
<span style="position:absolute;left:692.56px;top:639.35px;font-size:14px;line-height:1;white-space:pre;color:#111;">:</span>
<div style="position:absolute;left:705.00px;top:636.00px;width:187.00px;height:23.00px;box-sizing:border-box;background:#e9ecef;border:1px solid #ced4da;border-radius:3px;"></div>
<span style="position:absolute;left:711.79px;top:640.17px;font-size:13.5px;line-height:1;white-space:pre;color:#212529;letter-spacing:0.713px;">0.00</span>
<div style="position:absolute;left:568.00px;top:662.00px;width:132.00px;height:33.00px;box-sizing:border-box;background:#f4f5f3;border:1px solid #d9d6d6;"></div>
<div style="position:absolute;left:699.00px;top:662.00px;width:199.00px;height:33.00px;box-sizing:border-box;background:#fff;border:1px solid #d9d6d6;"></div>
<span style="position:absolute;left:574.56px;top:669.65px;font-size:14px;line-height:1;white-space:pre;color:#111;letter-spacing:1.118px;-webkit-text-stroke:0.15px #111;">Total Vat</span>
<span style="position:absolute;left:692.56px;top:670.35px;font-size:14px;line-height:1;white-space:pre;color:#111;">:</span>
<div style="position:absolute;left:705.00px;top:667.00px;width:187.00px;height:23.00px;box-sizing:border-box;background:#e9ecef;border:1px solid #ced4da;border-radius:3px;"></div>
<span style="position:absolute;left:711.79px;top:671.17px;font-size:13.5px;line-height:1;white-space:pre;color:#212529;letter-spacing:0.713px;">0.00</span>
<div style="position:absolute;left:897.00px;top:568.00px;width:132.00px;height:32.00px;box-sizing:border-box;background:#f4f5f3;border:1px solid #d9d6d6;"></div>
<div style="position:absolute;left:1028.00px;top:568.00px;width:198.00px;height:32.00px;box-sizing:border-box;background:#fff;border:1px solid #d9d6d6;"></div>
<span style="position:absolute;left:902.96px;top:575.65px;font-size:14px;line-height:1;white-space:pre;color:#111;letter-spacing:0.148px;-webkit-text-stroke:0.15px #111;">Dis.(%)</span>
<span style="position:absolute;left:1020.96px;top:576.35px;font-size:14px;line-height:1;white-space:pre;color:#111;">:</span>
<div style="position:absolute;left:1034.00px;top:573.00px;width:186.00px;height:23.00px;box-sizing:border-box;background:#fff;border:1px solid #ced4da;border-radius:3px;"></div>
<span style="position:absolute;left:1040.19px;top:577.17px;font-size:13.5px;line-height:1;white-space:pre;color:#212529;letter-spacing:0.713px;">0.00</span>
<div style="position:absolute;left:897.00px;top:599.00px;width:132.00px;height:33.00px;box-sizing:border-box;background:#f4f5f3;border:1px solid #d9d6d6;"></div>
<div style="position:absolute;left:1028.00px;top:599.00px;width:198.00px;height:33.00px;box-sizing:border-box;background:#fff;border:1px solid #d9d6d6;"></div>
<span style="position:absolute;left:902.96px;top:606.65px;font-size:14px;line-height:1;white-space:pre;color:#111;letter-spacing:0.977px;-webkit-text-stroke:0.15px #111;">Other Charge</span>
<span style="position:absolute;left:1020.96px;top:607.35px;font-size:14px;line-height:1;white-space:pre;color:#111;">:</span>
<div style="position:absolute;left:1034.00px;top:604.00px;width:186.00px;height:23.00px;box-sizing:border-box;background:#fff;border:1px solid #ced4da;border-radius:3px;"></div>
<span style="position:absolute;left:1040.19px;top:608.17px;font-size:13.5px;line-height:1;white-space:pre;color:#212529;letter-spacing:0.713px;">0.00</span>
<div style="position:absolute;left:897.00px;top:631.00px;width:132.00px;height:32.00px;box-sizing:border-box;background:#f4f5f3;border:1px solid #d9d6d6;"></div>
<div style="position:absolute;left:1028.00px;top:631.00px;width:198.00px;height:32.00px;box-sizing:border-box;background:#fff;border:1px solid #d9d6d6;"></div>
<span style="position:absolute;left:902.96px;top:638.65px;font-size:14px;line-height:1;white-space:pre;color:#111;letter-spacing:0.908px;-webkit-text-stroke:0.15px #111;">Allowance(%)</span>
<span style="position:absolute;left:1020.96px;top:639.35px;font-size:14px;line-height:1;white-space:pre;color:#111;">:</span>
<div style="position:absolute;left:1034.00px;top:636.00px;width:186.00px;height:23.00px;box-sizing:border-box;background:#fff;border:1px solid #ced4da;border-radius:3px;"></div>
<span style="position:absolute;left:1040.19px;top:640.17px;font-size:13.5px;line-height:1;white-space:pre;color:#212529;letter-spacing:0.713px;">0.00</span>
<div style="position:absolute;left:897.00px;top:662.00px;width:132.00px;height:33.00px;box-sizing:border-box;background:#f4f5f3;border:1px solid #d9d6d6;"></div>
<div style="position:absolute;left:1028.00px;top:662.00px;width:198.00px;height:33.00px;box-sizing:border-box;background:#fff;border:1px solid #d9d6d6;"></div>
<span style="position:absolute;left:902.96px;top:669.65px;font-size:14px;line-height:1;white-space:pre;color:#111;letter-spacing:0.835px;-webkit-text-stroke:0.15px #111;">Net Total</span>
<span style="position:absolute;left:1020.96px;top:670.35px;font-size:14px;line-height:1;white-space:pre;color:#111;">:</span>
<div style="position:absolute;left:1034.00px;top:667.00px;width:186.00px;height:23.00px;box-sizing:border-box;background:#e9ecef;border:1px solid #ced4da;border-radius:3px;"></div>
<span style="position:absolute;left:1040.19px;top:671.17px;font-size:13.5px;line-height:1;white-space:pre;color:#212529;letter-spacing:0.713px;">0.00</span>
<div style="position:absolute;left:1018.00px;top:702.00px;width:53.00px;height:23.00px;box-sizing:border-box;background:#ffd800;border:1px solid #5f6d8c;border-radius:3px;"></div>
<span style="position:absolute;left:1026.19px;top:706.37px;font-size:13.5px;line-height:1;white-space:pre;color:#111;letter-spacing:0.335px;">Reset</span>
<div style="position:absolute;left:1077.00px;top:702.00px;width:67.00px;height:23.00px;box-sizing:border-box;background:#f4703f;border:1px solid #8a6f78;border-radius:3px;"></div>
<span style="position:absolute;left:1085.69px;top:706.37px;font-size:13.5px;line-height:1;white-space:pre;color:#fff;letter-spacing:0.434px;-webkit-text-stroke:0.3px #fff;">Preview</span>
<div style="position:absolute;left:1151.00px;top:702.00px;width:75.00px;height:23.00px;box-sizing:border-box;background:#0fa958;border:1px solid #3f7a6a;border-radius:3px;"></div>
<span style="position:absolute;left:1159.19px;top:706.37px;font-size:13.5px;line-height:1;white-space:pre;color:#fff;letter-spacing:0.725px;-webkit-text-stroke:0.3px #fff;">obs.save</span>
<div style="position:absolute;left:1233.00px;top:569.00px;width:307.00px;height:159.00px;box-sizing:border-box;background:#fff;border:1px solid #dee2e6;"></div>
<span style="position:absolute;left:1334.47px;top:575.08px;font-size:15.5px;line-height:1;white-space:pre;color:#0f4c3a;font-weight:700;letter-spacing:-0.274px;">Payment Method</span>
<div style="position:absolute;left:1239.00px;top:597.00px;width:301.00px;height:25.00px;box-sizing:border-box;background:#f4f5f3;border:1px solid #d9d6d6;"></div>
<div style="position:absolute;left:1377.00px;top:597.00px;width:1.00px;height:25.00px;box-sizing:border-box;background:#d9d6d6;"></div>
<div style="position:absolute;left:1240.00px;top:598.00px;width:130.00px;height:22.00px;box-sizing:border-box;background:#fff;border:1px solid #ced4da;border-radius:3px;"></div>
<span style="position:absolute;left:1245.59px;top:602.87px;font-size:13.5px;line-height:1;white-space:pre;color:#212529;letter-spacing:0.627px;">Select Cash/Ba</span>
<svg style="left:1349.50px;top:606.20px" width="11" height="6.60" viewBox="0 0 11 6.60"><path d="M0.775 0.775L5.5 5.82L10.225 0.775" fill="none" stroke="#343a40" stroke-width="1.35" stroke-linecap="round" stroke-linejoin="round"/></svg>
<div style="position:absolute;left:1378.00px;top:598.00px;width:162.00px;height:22.00px;box-sizing:border-box;background:#fff;border:1px solid #ced4da;border-radius:3px;"></div>
<span style="position:absolute;left:1384.49px;top:602.37px;font-size:13.5px;line-height:1;white-space:pre;color:#212529;letter-spacing:0.680px;">0.00</span>
<div style="position:absolute;left:1239.00px;top:627.00px;width:301.00px;height:29.00px;box-sizing:border-box;background:#f4f5f3;border:1px solid #d9d6d6;"></div>
<div style="position:absolute;left:1377.00px;top:627.00px;width:1.00px;height:29.00px;box-sizing:border-box;background:#d9d6d6;"></div>
<div style="position:absolute;left:1247.00px;top:631.00px;width:117.00px;height:22.00px;box-sizing:border-box;background:#fff;border:1px solid #ced4da;border-radius:3px;"></div>
<div style="position:absolute;left:1250px;top:633px;width:91.5px;height:18px;overflow:hidden">
<span style="position:absolute;left:2.39px;top:2.27px;font-size:13.5px;line-height:1;white-space:pre;color:#212529;letter-spacing:0.627px;">Select Cash/Ba</span>
</div>
<svg style="left:1343.50px;top:638.70px" width="11" height="6.60" viewBox="0 0 11 6.60"><path d="M0.775 0.775L5.5 5.82L10.225 0.775" fill="none" stroke="#343a40" stroke-width="1.35" stroke-linecap="round" stroke-linejoin="round"/></svg>
<div style="position:absolute;left:1378.00px;top:630.00px;width:162.00px;height:22.00px;box-sizing:border-box;background:#fff;border:1px solid #ced4da;border-radius:3px;"></div>
<span style="position:absolute;left:1384.49px;top:634.17px;font-size:13.5px;line-height:1;white-space:pre;color:#212529;letter-spacing:0.680px;">0.00</span>
<div style="position:absolute;left:1239.00px;top:661.00px;width:301.00px;height:27.00px;box-sizing:border-box;background:#f4f5f3;border:1px solid #d9d6d6;"></div>
<div style="position:absolute;left:1377.00px;top:661.00px;width:1.00px;height:27.00px;box-sizing:border-box;background:#d9d6d6;"></div>
<span style="position:absolute;left:1246.66px;top:667.45px;font-size:14px;line-height:1;white-space:pre;color:#111;letter-spacing:1.400px;">Total</span>
<span style="position:absolute;left:1363.96px;top:667.95px;font-size:14px;line-height:1;white-space:pre;color:#111;">:</span>
<div style="position:absolute;left:1378.00px;top:663.00px;width:162.00px;height:23.00px;box-sizing:border-box;background:#e9ecef;border:1px solid #ced4da;border-radius:3px;"></div>
<span style="position:absolute;left:1384.49px;top:668.17px;font-size:13.5px;line-height:1;white-space:pre;color:#212529;letter-spacing:0.680px;">0.00</span>
<div style="position:absolute;left:1239.00px;top:694.00px;width:301.00px;height:27.00px;box-sizing:border-box;background:#f4f5f3;border:1px solid #d9d6d6;"></div>
<div style="position:absolute;left:1377.00px;top:694.00px;width:1.00px;height:27.00px;box-sizing:border-box;background:#d9d6d6;"></div>
<span style="position:absolute;left:1246.66px;top:700.35px;font-size:14px;line-height:1;white-space:pre;color:#111;letter-spacing:1.246px;">Due</span>
<span style="position:absolute;left:1363.96px;top:700.85px;font-size:14px;line-height:1;white-space:pre;color:#111;">:</span>
<div style="position:absolute;left:1378.00px;top:697.00px;width:162.00px;height:21.00px;box-sizing:border-box;background:#e9ecef;border:1px solid #ced4da;border-radius:3px;"></div>
<span style="position:absolute;left:1384.49px;top:700.57px;font-size:13.5px;line-height:1;white-space:pre;color:#212529;letter-spacing:0.680px;">0.00</span>
</div>
</body></html>
